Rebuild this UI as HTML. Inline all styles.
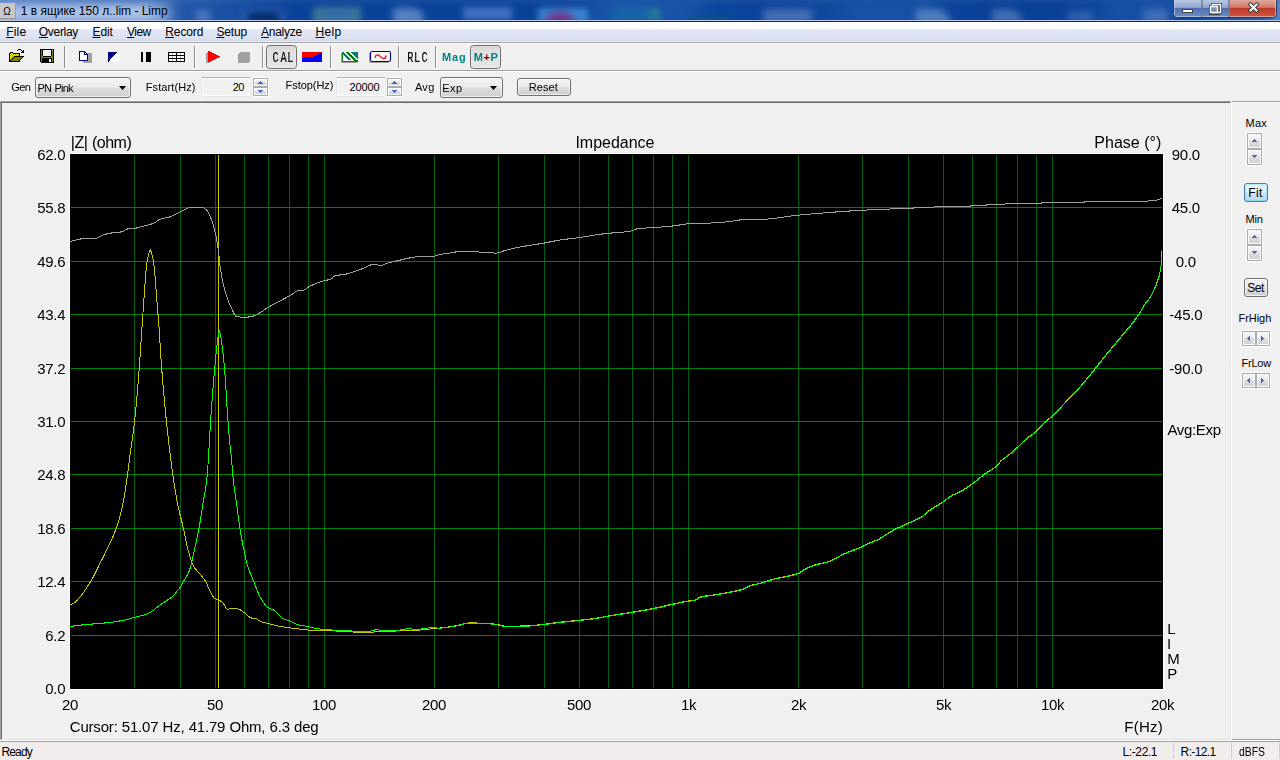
<!DOCTYPE html>
<html><head><meta charset="utf-8"><title>1 в ящике 150 л..lim - Limp</title>
<style>
html,body{margin:0;padding:0;}
body{width:1280px;height:760px;overflow:hidden;background:#f0f0f0;position:relative;font-family:"Liberation Sans",sans-serif;}
.t{position:absolute;white-space:pre;transform-origin:0 0;}
svg{position:absolute;overflow:visible;}
u{text-decoration:underline;text-underline-offset:1px;}
</style></head>
<body>
<div style="position:absolute;left:0;top:0;width:1280px;height:20px;overflow:hidden;background:linear-gradient(180deg,rgba(255,255,255,.05) 0,rgba(255,255,255,0) 6px),linear-gradient(90deg,#3f6cb6 0px,#1f55a8 200px,#0a429a 300px,#0a429a 560px,#0f489f 640px,#0a439b 760px,#0f489e 830px,#0f489e 900px,#083f97 1000px,#0d459c 1180px,#2e60b0 1280px);"><div style="position:absolute;left:590px;top:-10px;width:110px;height:40px;background:#1d57ad;filter:blur(10px);opacity:0.8;transform:skewX(-30deg);"></div><div style="position:absolute;left:840px;top:-10px;width:90px;height:40px;background:#1a53a8;filter:blur(10px);opacity:0.8;transform:skewX(-30deg);"></div><div style="position:absolute;left:1100px;top:-10px;width:80px;height:40px;background:#1c55aa;filter:blur(10px);opacity:0.7;transform:skewX(-30deg);"></div><div style="position:absolute;left:-30px;top:4px;width:200px;height:20px;background:#9db7e2;filter:blur(7px);opacity:1;"></div><div style="position:absolute;left:-10px;top:7px;width:160px;height:11px;background:#b7cbeb;filter:blur(5px);opacity:0.85;"></div><div style="position:absolute;left:196px;top:10px;width:14px;height:12px;background:#5580c4;filter:blur(3px);opacity:0.8;"></div><div style="position:absolute;left:242px;top:9px;width:42px;height:15px;background:#2a5cae;filter:blur(3px);opacity:0.9;"></div><div style="position:absolute;left:248px;top:12px;width:31px;height:12px;background:#032f6c;filter:blur(3px);opacity:1;"></div><div style="position:absolute;left:313px;top:7px;width:48px;height:17px;background:#5f9692;filter:blur(3px);opacity:0.62;"></div><div style="position:absolute;left:322px;top:11px;width:28px;height:6px;background:#2a6cb2;filter:blur(2.5px);opacity:0.9;"></div><div style="position:absolute;left:393px;top:8px;width:31px;height:16px;background:#5f8ac6;filter:blur(3.5px);opacity:0.9;border-radius:0 12px 0 0;"></div><div style="position:absolute;left:463px;top:7px;width:49px;height:13px;background:#4472c2;filter:blur(3px);opacity:0.95;"></div><div style="position:absolute;left:538px;top:8px;width:50px;height:16px;background:#3f86d0;filter:blur(3px);opacity:0.95;"></div><div style="position:absolute;left:544px;top:12px;width:32px;height:18px;background:#74358a;filter:blur(3.5px);opacity:1;border-radius:14px 14px 0 0;"></div><div style="position:absolute;left:612px;top:7px;width:48px;height:17px;background:#1b67a8;filter:blur(3.5px);opacity:0.85;"></div><div style="position:absolute;left:650px;top:9px;width:10px;height:11px;background:#2f8f8c;filter:blur(3px);opacity:0.6;"></div><div style="position:absolute;left:690px;top:17px;width:40px;height:7px;background:#0a5c80;filter:blur(3px);opacity:0.8;"></div><div style="position:absolute;left:763px;top:9px;width:49px;height:15px;background:#4a72b6;filter:blur(3.5px);opacity:0.9;"></div><div style="position:absolute;left:916px;top:9px;width:34px;height:15px;background:#5784c2;filter:blur(3.5px);opacity:0.9;border-radius:0 14px 0 0;"></div><div style="position:absolute;left:992px;top:9px;width:30px;height:15px;background:#4a74b6;filter:blur(3.5px);opacity:0.85;border-radius:0 12px 0 0;"></div><div style="position:absolute;left:1068px;top:10px;width:25px;height:14px;background:#3565b2;filter:blur(3.5px);opacity:0.8;"></div><div style="position:absolute;left:1143px;top:9px;width:25px;height:15px;background:#4674ba;filter:blur(3.5px);opacity:0.85;"></div><div style="position:absolute;left:1272px;top:-4px;width:18px;height:28px;background:#5f86c4;filter:blur(4px);opacity:0.9;"></div></div>
<div style="position:absolute;left:0px;top:20px;width:1280px;height:1px;background:#b9cbe8;"></div>
<div style="position:absolute;left:0px;top:21px;width:1280px;height:1px;background:#16284f;"></div>
<div style="position:absolute;left:0px;top:3px;width:16px;height:16px;background:#c8c8c8;border-right:1px solid #9a9a9a;border-bottom:1px solid #9a9a9a;box-sizing:border-box;"></div>
<span class="t " style="left:3.23px;top:7px;font-size:10px;line-height:10px;color:#000;">Ω</span>
<span class="t " style="left:20.73px;top:5px;font-size:12px;line-height:12px;color:#000;letter-spacing:-0.013px;word-spacing:0.013px;">1 в ящике 150 л..lim - Limp</span>
<svg style="left:1172px;top:0" width="106" height="19" viewBox="0 0 106 19"><defs><linearGradient id="wb" x1="0" y1="0" x2="0" y2="1"><stop offset="0" stop-color="#b8c8e2"/><stop offset=".45" stop-color="#8fa6cf"/><stop offset=".5" stop-color="#4f6fae"/><stop offset="1" stop-color="#6d8cc4"/></linearGradient><linearGradient id="wc" x1="0" y1="0" x2="0" y2="1"><stop offset="0" stop-color="#e2a79c"/><stop offset=".45" stop-color="#d2766a"/><stop offset=".5" stop-color="#bd3a27"/><stop offset="1" stop-color="#d0553e"/></linearGradient></defs><path d="M1.5 -1V13.5Q1.5 17.5 5.5 17.5H100.5Q104.5 17.5 104.5 13.5V-1Z" fill="#dfe6f3" stroke="#27375e" stroke-width="1"/><path d="M2.5 0H29.5V16.5H5.5Q2.5 16.5 2.5 13.5Z" fill="url(#wb)"/><path d="M30.5 0H56.5V16.5H30.5Z" fill="url(#wb)"/><path d="M57.5 0H103.5V13.5Q103.5 16.5 100.5 16.5H57.5Z" fill="url(#wc)"/><path d="M30 0V17M57 0V17" stroke="#33446e" stroke-width="1"/><rect x="10.5" y="9.5" width="10" height="3" fill="#fff" stroke="#444" stroke-width="1"/><path d="M40.500 4.500h8v8h-8z M38.500 6.500h8v7h-8z" fill="none" stroke="#444" stroke-width="3"/><path d="M40.500 4.500h8v8h-8z" fill="none" stroke="#fff" stroke-width="1.4"/><path d="M38.500 6.500h7v6h-7z" fill="#7890c0" stroke="#fff" stroke-width="1.4"/><path d="M78.500 4.500L84.500 10.500M84.500 4.500L78.500 10.500" stroke="#3a3a3a" stroke-width="4" stroke-linecap="square"/><path d="M78.500 4.500L84.500 10.500M84.500 4.500L78.500 10.500" stroke="#fff" stroke-width="2" stroke-linecap="square"/></svg>
<div style="position:absolute;left:0px;top:22px;width:1280px;height:20px;background:linear-gradient(180deg,#fff 0,#fff 6px,#e3e7f4 8px,#dde2f1 17px,#ced5e6 18px,#ced5e6 19px,#f3f4f9 19px,#f3f4f9 20px);"></div>
<div style="position:absolute;left:0px;top:42px;width:1280px;height:1px;background:#a0a0a0;"></div>
<span class="t " style="left:6.20px;top:26px;font-size:12px;line-height:12px;color:#000;letter-spacing:0.183px;"><u>F</u>ile</span>
<span class="t " style="left:38.80px;top:26px;font-size:12px;line-height:12px;color:#000;letter-spacing:-0.312px;"><u>O</u>verlay</span>
<span class="t " style="left:92.50px;top:26px;font-size:12px;line-height:12px;color:#000;letter-spacing:-0.108px;"><u>E</u>dit</span>
<span class="t " style="left:127.08px;top:26px;font-size:12px;line-height:12px;color:#000;letter-spacing:-0.583px;"><u>V</u>iew</span>
<span class="t " style="left:165.30px;top:26px;font-size:12px;line-height:12px;color:#000;letter-spacing:-0.115px;"><u>R</u>ecord</span>
<span class="t " style="left:216.50px;top:26px;font-size:12px;line-height:12px;color:#000;letter-spacing:-0.188px;"><u>S</u>etup</span>
<span class="t " style="left:261.00px;top:26px;font-size:12px;line-height:12px;color:#000;letter-spacing:-0.271px;"><u>A</u>nalyze</span>
<span class="t " style="left:315.50px;top:26px;font-size:12px;line-height:12px;color:#000;letter-spacing:0.292px;"><u>H</u>elp</span>
<div style="position:absolute;left:0px;top:43px;width:1280px;height:1px;background:#fafafa;"></div>
<div style="position:absolute;left:0px;top:70px;width:1280px;height:1px;background:#a0a0a0;"></div>
<div style="position:absolute;left:0px;top:71px;width:1280px;height:1px;background:#fff;"></div>
<div style="position:absolute;left:64px;top:46px;width:1px;height:22px;background:#8c8c8c;"></div>
<div style="position:absolute;left:65px;top:46px;width:1px;height:22px;background:#fff;"></div>
<div style="position:absolute;left:194px;top:46px;width:1px;height:22px;background:#8c8c8c;"></div>
<div style="position:absolute;left:195px;top:46px;width:1px;height:22px;background:#fff;"></div>
<div style="position:absolute;left:262px;top:46px;width:1px;height:22px;background:#8c8c8c;"></div>
<div style="position:absolute;left:263px;top:46px;width:1px;height:22px;background:#fff;"></div>
<div style="position:absolute;left:330px;top:46px;width:1px;height:22px;background:#8c8c8c;"></div>
<div style="position:absolute;left:331px;top:46px;width:1px;height:22px;background:#fff;"></div>
<div style="position:absolute;left:398px;top:46px;width:1px;height:22px;background:#8c8c8c;"></div>
<div style="position:absolute;left:399px;top:46px;width:1px;height:22px;background:#fff;"></div>
<div style="position:absolute;left:435px;top:46px;width:1px;height:22px;background:#8c8c8c;"></div>
<div style="position:absolute;left:436px;top:46px;width:1px;height:22px;background:#fff;"></div>
<svg style="left:9px;top:49px" width="16" height="13" viewBox="0 0 16 13" shape-rendering="crispEdges"><path fill="#000" d="M9 0h3v1h-3zM8 1h1v1h-1zM12 1h1v1h-1zM14 1h1v1h-1zM13 2h2v1h-2zM1 3h3v1h-3zM12 3h3v1h-3zM0 4h1v1h-1zM4 4h7v1h-7zM0 5h1v1h-1zM10 5h1v1h-1zM0 6h1v1h-1zM10 6h1v1h-1zM0 7h1v1h-1zM5 7h10v1h-10zM0 8h1v1h-1zM4 8h1v1h-1zM13 8h1v1h-1zM0 9h1v1h-1zM3 9h1v1h-1zM12 9h1v1h-1zM0 10h1v1h-1zM2 10h1v1h-1zM11 10h1v1h-1zM0 11h2v1h-2zM10 11h1v1h-1zM0 12h11v1h-11z"/><path fill="#00ff00" d="M1 4h1v1h-1zM3 4h1v1h-1zM2 5h1v1h-1zM4 5h1v1h-1zM6 5h1v1h-1zM8 5h1v1h-1zM1 6h1v1h-1zM3 6h1v1h-1zM5 6h1v1h-1zM7 6h1v1h-1zM9 6h1v1h-1zM2 7h1v1h-1zM4 7h1v1h-1zM1 8h1v1h-1zM3 8h1v1h-1zM2 9h1v1h-1zM1 10h1v1h-1z"/><path fill="#ffff00" d="M2 4h1v1h-1zM1 5h1v1h-1zM3 5h1v1h-1zM5 5h1v1h-1zM7 5h1v1h-1zM9 5h1v1h-1zM2 6h1v1h-1zM4 6h1v1h-1zM6 6h1v1h-1zM8 6h1v1h-1zM1 7h1v1h-1zM3 7h1v1h-1zM2 8h1v1h-1zM1 9h1v1h-1z"/><path fill="#808000" d="M5 8h8v1h-8zM4 9h8v1h-8zM3 10h8v1h-8zM2 11h8v1h-8z"/></svg>
<svg style="left:40px;top:49px" width="14" height="14" viewBox="0 0 14 14" shape-rendering="crispEdges"><path fill="#000" d="M0 0h14v1h-14zM0 1h1v1h-1zM2 1h1v1h-1zM11 1h1v1h-1zM13 1h1v1h-1zM0 2h1v1h-1zM2 2h1v1h-1zM11 2h1v1h-1zM13 2h1v1h-1zM0 3h1v1h-1zM2 3h1v1h-1zM11 3h1v1h-1zM13 3h1v1h-1zM0 4h1v1h-1zM2 4h1v1h-1zM11 4h1v1h-1zM13 4h1v1h-1zM0 5h1v1h-1zM2 5h1v1h-1zM11 5h1v1h-1zM13 5h1v1h-1zM0 6h1v1h-1zM2 6h1v1h-1zM11 6h1v1h-1zM13 6h1v1h-1zM0 7h1v1h-1zM3 7h8v1h-8zM13 7h1v1h-1zM0 8h1v1h-1zM13 8h1v1h-1zM0 9h1v1h-1zM2 9h10v1h-10zM13 9h1v1h-1zM0 10h1v1h-1zM2 10h7v1h-7zM11 10h1v1h-1zM13 10h1v1h-1zM0 11h1v1h-1zM2 11h7v1h-7zM11 11h1v1h-1zM13 11h1v1h-1zM0 12h1v1h-1zM2 12h7v1h-7zM11 12h1v1h-1zM13 12h1v1h-1zM1 13h13v1h-13z"/><path fill="#808000" d="M1 1h1v1h-1zM1 2h1v1h-1zM12 2h1v1h-1zM1 3h1v1h-1zM12 3h1v1h-1zM1 4h1v1h-1zM12 4h1v1h-1zM1 5h1v1h-1zM12 5h1v1h-1zM1 6h1v1h-1zM12 6h1v1h-1zM1 7h2v1h-2zM11 7h2v1h-2zM1 8h12v1h-12zM1 9h1v1h-1zM12 9h1v1h-1zM1 10h1v1h-1zM12 10h1v1h-1zM1 11h1v1h-1zM12 11h1v1h-1zM1 12h1v1h-1zM12 12h1v1h-1z"/><path fill="#f0f0f0" d="M3 1h8v1h-8zM12 1h1v1h-1zM3 2h8v1h-8zM3 3h8v1h-8zM3 4h8v1h-8zM3 5h8v1h-8zM3 6h8v1h-8zM9 10h2v1h-2zM9 11h2v1h-2zM9 12h2v1h-2z"/></svg>
<svg style="left:79px;top:51px" width="13" height="12" viewBox="0 0 13 12" shape-rendering="crispEdges"><path fill="#000080" d="M0 0h6v1h-6zM0 1h1v1h-1zM5 1h2v1h-2zM0 2h1v1h-1zM5 2h1v1h-1zM7 2h1v1h-1zM0 3h1v1h-1zM5 3h4v1h-4zM0 4h1v1h-1zM8 4h1v1h-1zM0 5h1v1h-1zM8 5h1v1h-1zM0 6h1v1h-1zM8 6h1v1h-1zM0 7h1v1h-1zM8 7h1v1h-1zM0 8h1v1h-1zM8 8h1v1h-1zM0 9h9v1h-9z"/><path fill="#fff" d="M1 1h4v1h-4zM1 2h4v1h-4zM6 2h1v1h-1zM1 3h4v1h-4zM1 4h7v1h-7zM1 5h7v1h-7zM1 6h7v1h-7zM1 7h7v1h-7zM1 8h7v1h-7z"/><path fill="#a0a0a0" d="M8 2h5v1h-5zM9 3h4v1h-4zM9 4h4v1h-4zM9 5h4v1h-4zM9 6h4v1h-4zM9 7h4v1h-4zM9 8h4v1h-4zM9 9h4v1h-4zM4 10h9v1h-9zM4 11h9v1h-9z"/></svg>
<svg style="left:108px;top:52px" width="12" height="10" viewBox="0 0 12 10" shape-rendering="crispEdges"><path fill="#000080" d="M0 0h9v1h-9zM0 1h8v1h-8zM0 2h7v1h-7zM0 3h6v1h-6zM0 4h5v1h-5zM0 5h4v1h-4zM0 6h3v1h-3zM1 7h1v1h-1zM0 8h2v1h-2zM0 9h1v1h-1z"/><path fill="#fff" d="M9 0h3v1h-3zM8 1h4v1h-4zM7 2h5v1h-5zM6 3h6v1h-6zM5 4h7v1h-7zM4 5h8v1h-8zM3 6h9v1h-9zM2 7h10v1h-10zM2 8h10v1h-10zM1 9h11v1h-11z"/><path fill="#000" d="M0 7h1v1h-1z"/></svg>
<svg style="left:141px;top:52px" width="10" height="10" viewBox="0 0 10 10" shape-rendering="crispEdges"><path fill="#000" d="M0 0h2v1h-2zM5 0h5v1h-5zM0 1h2v1h-2zM5 1h5v1h-5zM0 2h2v1h-2zM5 2h5v1h-5zM0 3h2v1h-2zM5 3h5v1h-5zM0 4h2v1h-2zM5 4h5v1h-5zM0 5h2v1h-2zM5 5h5v1h-5zM0 6h2v1h-2zM5 6h5v1h-5zM0 7h2v1h-2zM5 7h5v1h-5zM0 8h2v1h-2zM5 8h5v1h-5zM0 9h2v1h-2zM5 9h5v1h-5z"/></svg>
<svg style="left:168px;top:52px" width="17" height="10" viewBox="0 0 17 10" shape-rendering="crispEdges"><path fill="#000" d="M0 0h17v1h-17zM0 1h1v1h-1zM8 1h1v1h-1zM16 1h1v1h-1zM0 2h1v1h-1zM8 2h1v1h-1zM16 2h1v1h-1zM0 3h17v1h-17zM0 4h1v1h-1zM8 4h1v1h-1zM16 4h1v1h-1zM0 5h1v1h-1zM8 5h1v1h-1zM16 5h1v1h-1zM0 6h17v1h-17zM0 7h1v1h-1zM8 7h1v1h-1zM16 7h1v1h-1zM0 8h1v1h-1zM8 8h1v1h-1zM16 8h1v1h-1zM0 9h17v1h-17z"/><path fill="#fff" d="M1 1h3v1h-3zM5 1h3v1h-3zM9 1h3v1h-3zM13 1h3v1h-3zM1 2h3v1h-3zM5 2h3v1h-3zM9 2h3v1h-3zM13 2h3v1h-3zM1 4h3v1h-3zM5 4h3v1h-3zM9 4h3v1h-3zM13 4h3v1h-3zM1 5h3v1h-3zM5 5h3v1h-3zM9 5h3v1h-3zM13 5h3v1h-3zM1 7h3v1h-3zM5 7h3v1h-3zM9 7h3v1h-3zM13 7h3v1h-3zM1 8h3v1h-3zM5 8h3v1h-3zM9 8h3v1h-3zM13 8h3v1h-3z"/><path fill="#c0c0c0" d="M4 1h1v1h-1zM12 1h1v1h-1zM4 2h1v1h-1zM12 2h1v1h-1zM4 4h1v1h-1zM12 4h1v1h-1zM4 5h1v1h-1zM12 5h1v1h-1zM4 7h1v1h-1zM12 7h1v1h-1zM4 8h1v1h-1zM12 8h1v1h-1z"/></svg>
<svg style="left:206px;top:51px" width="15" height="12" viewBox="0 0 15 12" shape-rendering="crispEdges"><path fill="#ff0000" d="M2 0h2v1h-2zM2 1h4v1h-4zM2 2h6v1h-6zM2 3h8v1h-8zM2 4h10v1h-10zM2 5h12v1h-12zM2 6h10v1h-10zM2 7h8v1h-8zM2 8h6v1h-6zM2 9h4v1h-4zM2 10h2v1h-2z"/><path fill="#a0a0a0" d="M1 1h1v1h-1zM0 2h2v1h-2zM0 3h2v1h-2zM0 4h2v1h-2zM0 5h2v1h-2zM0 6h2v1h-2zM12 6h2v1h-2zM0 7h2v1h-2zM10 7h2v1h-2zM0 8h2v1h-2zM8 8h2v1h-2zM0 9h2v1h-2zM6 9h2v1h-2zM0 10h2v1h-2zM4 10h2v1h-2zM0 11h4v1h-4z"/></svg>
<svg style="left:238px;top:52px" width="12" height="11" viewBox="0 0 12 11" shape-rendering="crispEdges"><path fill="#a0a0a0" d="M2 0h10v1h-10zM1 1h11v1h-11zM0 2h12v1h-12zM0 3h12v1h-12zM0 4h12v1h-12zM0 5h12v1h-12zM0 6h12v1h-12zM0 7h12v1h-12zM0 8h12v1h-12zM0 9h12v1h-12zM0 10h11v1h-11z"/></svg>
<svg style="left:302px;top:52px" width="20" height="10" viewBox="0 0 20 10" shape-rendering="crispEdges"><path fill="#ff0000" d="M0 0h19v1h-19zM0 1h17v1h-17zM0 2h16v1h-16zM0 3h14v1h-14zM0 4h12v1h-12z"/><path fill="#0000ff" d="M19 0h1v1h-1zM17 1h3v1h-3zM16 2h4v1h-4zM14 3h6v1h-6zM12 4h8v1h-8zM0 5h20v1h-20zM0 6h20v1h-20zM0 7h20v1h-20zM0 8h20v1h-20zM0 9h20v1h-20z"/></svg>
<div style="position:absolute;left:266px;top:45px;width:31px;height:24px;box-sizing:border-box;border:1px solid #6f6f6f;border-radius:3.5px;background:linear-gradient(180deg,#cfcfcf 0,#dcdcdc 3px,#e4e4e4 45%,#e0e0e0 50%,#e6e6e6 100%);box-shadow:inset 0 0 0 1px rgba(255,255,255,.25);"></div>
<div style="position:absolute;left:470px;top:45px;width:31px;height:24px;box-sizing:border-box;border:1px solid #6f6f6f;border-radius:3.5px;background:linear-gradient(180deg,#cfcfcf 0,#dcdcdc 3px,#e4e4e4 45%,#e0e0e0 50%,#e6e6e6 100%);box-shadow:inset 0 0 0 1px rgba(255,255,255,.25);"></div>
<svg style="left:0;top:0;will-change:transform" width="1280" height="100"><text transform="scale(0.675,1)" x="403.63 415.41 425.41" y="62" font-family="Liberation Mono, monospace" font-size="15.2" fill="#000" stroke="#000" stroke-width="0.2">CAL</text></svg>
<svg style="left:0;top:0;will-change:transform" width="1280" height="100"><text transform="scale(0.675,1)" x="603.26 613.41 624.37" y="62" font-family="Liberation Mono, monospace" font-size="15.2" fill="#000" stroke="#000" stroke-width="0.2">RLC</text></svg>
<svg style="left:341px;top:52px" width="17" height="11" viewBox="0 0 17 11" shape-rendering="crispEdges"><path fill="#008080" d="M1 0h2v1h-2zM10 0h7v1h-7zM1 1h3v1h-3zM11 1h6v1h-6zM2 2h3v1h-3zM12 2h5v1h-5zM3 3h3v1h-3zM13 3h4v1h-4zM4 4h3v1h-3zM14 4h3v1h-3zM5 5h3v1h-3zM15 5h2v1h-2zM6 6h3v1h-3zM16 6h1v1h-1zM7 7h3v1h-3z"/><path fill="#fff" d="M3 0h2v1h-2zM8 0h2v1h-2zM4 1h2v1h-2zM9 1h2v1h-2zM5 2h2v1h-2zM10 2h2v1h-2zM2 3h1v1h-1zM6 3h2v1h-2zM11 3h2v1h-2zM2 4h2v1h-2zM7 4h2v1h-2zM12 4h2v1h-2zM2 5h3v1h-3zM8 5h2v1h-2zM13 5h2v1h-2zM2 6h4v1h-4zM9 6h2v1h-2zM14 6h2v1h-2zM2 7h5v1h-5zM10 7h2v1h-2zM15 7h2v1h-2zM2 8h11v1h-11z"/><path fill="#008000" d="M5 0h3v1h-3zM6 1h3v1h-3zM1 2h1v1h-1zM7 2h3v1h-3zM1 3h1v1h-1zM8 3h3v1h-3zM1 4h1v1h-1zM9 4h3v1h-3zM1 5h1v1h-1zM10 5h3v1h-3zM1 6h1v1h-1zM11 6h3v1h-3zM1 7h1v1h-1zM12 7h3v1h-3zM1 8h1v1h-1zM13 8h4v1h-4zM1 9h16v1h-16z"/><path fill="#a39da6" d="M0 1h1v1h-1zM0 2h1v1h-1zM0 3h1v1h-1zM0 4h1v1h-1zM0 5h1v1h-1zM0 6h1v1h-1zM0 7h1v1h-1zM0 8h1v1h-1zM0 9h1v1h-1zM0 10h16v1h-16z"/></svg>
<svg style="left:369px;top:51px" width="22" height="12" viewBox="-1 0 22 12"><path d="M-0.500 2v9.500h19" fill="none" stroke="#a8a0a0" stroke-width="1"/><rect x="0.500" y="0.500" width="20" height="10" rx="1.800" fill="#f6f6f6" stroke="#000080" stroke-width="1.100"/><path d="M5.300 6.300C5.600 3.200 8.300 3.200 10.500 5.600S15.500 8.600 16 4.800" fill="none" stroke="#ff0000" stroke-width="1.300" stroke-linecap="round"/></svg>
<span class="t " style="left:442.05px;top:52px;font-size:11px;line-height:11px;color:#008080;letter-spacing:0.850px;font-weight:bold;">Mag</span>
<span class="t " style="left:473.85px;top:52px;font-size:11px;line-height:11px;color:#008080;letter-spacing:0.562px;font-weight:bold;">M<span style="color:#800000">+</span>P</span>
<span class="t " style="left:11.30px;top:82px;font-size:11px;line-height:11px;color:#000;letter-spacing:-0.550px;">Gen</span>
<div style="position:absolute;left:35px;top:77px;width:96px;height:21px;box-sizing:border-box;border:1px solid #707070;border-radius:3px;background:linear-gradient(180deg,#f2f2f2 0,#ebebeb 48%,#dddddd 52%,#cfcfcf 100%);box-shadow:inset 0 0 0 1px rgba(255,255,255,.7);"></div>
<span class="t " style="left:37.52px;top:83px;font-size:11px;line-height:11px;color:#000;letter-spacing:-0.735px;word-spacing:0.735px;">PN Pink</span>
<svg style="left:119px;top:86px" width="7" height="4" viewBox="0 0 7 4"><path d="M0 0H7L3.500 4Z" fill="#000"/></svg>
<span class="t " style="left:145.72px;top:82px;font-size:11px;line-height:11px;color:#000;letter-spacing:0.103px;">Fstart(Hz)</span>
<div style="position:absolute;left:201px;top:77px;width:50px;height:20px;box-sizing:border-box;border:1px solid #e1e4ea;border-top-color:#b0b3ba;background:#f1f1f1;border-radius:2px;box-shadow:inset 0 0 0 1px #fdfdfd;"></div>
<span class="t " style="left:232.70px;top:82px;font-size:11px;line-height:11px;color:#000;letter-spacing:-0.475px;">20</span>
<svg style="left:252px;top:77px" width="17" height="20" viewBox="-1 -1 17 20" shape-rendering="crispEdges"><defs><linearGradient id="sg0" x1="0" y1="0" x2="0" y2="1"><stop offset="0" stop-color="#f3f3f3"/><stop offset=".45" stop-color="#ececec"/><stop offset=".5" stop-color="#dedede"/><stop offset="1" stop-color="#d3d3d3"/></linearGradient></defs><rect x="-1" y="-1" width="17" height="20" fill="#fff"/><rect x="0" y="0" width="15" height="18" fill="#a9abb3"/><rect x="1" y="1" width="13" height="7" fill="#fcfcfc"/><rect x="2" y="2" width="11" height="5" fill="url(#sg0)"/><path d="M7 3h1v1h-1zM6 4h3v1h-3zM5 5h5v1h-5z" fill="#4a63c4"/><rect x="1" y="10" width="13" height="7" fill="#fcfcfc"/><rect x="2" y="11" width="11" height="5" fill="url(#sg0)"/><path d="M5 12h5v1h-5zM6 13h3v1h-3zM7 14h1v1h-1z" fill="#4a63c4"/></svg>
<span class="t " style="left:285.52px;top:80px;font-size:11px;line-height:11px;color:#000;letter-spacing:-0.044px;">Fstop(Hz)</span>
<div style="position:absolute;left:336px;top:77px;width:50px;height:20px;box-sizing:border-box;border:1px solid #e1e4ea;border-top-color:#b0b3ba;background:#f1f1f1;border-radius:2px;box-shadow:inset 0 0 0 1px #fdfdfd;"></div>
<span class="t " style="left:349.50px;top:82px;font-size:11px;line-height:11px;color:#000;letter-spacing:-0.088px;">20000</span>
<svg style="left:386px;top:77px" width="17" height="20" viewBox="-1 -1 17 20" shape-rendering="crispEdges"><defs><linearGradient id="sg1" x1="0" y1="0" x2="0" y2="1"><stop offset="0" stop-color="#f3f3f3"/><stop offset=".45" stop-color="#ececec"/><stop offset=".5" stop-color="#dedede"/><stop offset="1" stop-color="#d3d3d3"/></linearGradient></defs><rect x="-1" y="-1" width="17" height="20" fill="#fff"/><rect x="0" y="0" width="15" height="18" fill="#a9abb3"/><rect x="1" y="1" width="13" height="7" fill="#fcfcfc"/><rect x="2" y="2" width="11" height="5" fill="url(#sg1)"/><path d="M7 3h1v1h-1zM6 4h3v1h-3zM5 5h5v1h-5z" fill="#4a63c4"/><rect x="1" y="10" width="13" height="7" fill="#fcfcfc"/><rect x="2" y="11" width="11" height="5" fill="url(#sg1)"/><path d="M5 12h5v1h-5zM6 13h3v1h-3zM7 14h1v1h-1z" fill="#4a63c4"/></svg>
<span class="t " style="left:414.90px;top:82px;font-size:11px;line-height:11px;color:#000;letter-spacing:0.300px;">Avg</span>
<div style="position:absolute;left:440px;top:77px;width:63px;height:21px;box-sizing:border-box;border:1px solid #707070;border-radius:3px;background:linear-gradient(180deg,#f2f2f2 0,#ebebeb 48%,#dddddd 52%,#cfcfcf 100%);box-shadow:inset 0 0 0 1px rgba(255,255,255,.7);"></div>
<span class="t " style="left:442.32px;top:83px;font-size:11px;line-height:11px;color:#000;letter-spacing:0.387px;">Exp</span>
<svg style="left:490px;top:86px" width="7" height="4" viewBox="0 0 7 4"><path d="M0 0H7L3.500 4Z" fill="#000"/></svg>
<div style="position:absolute;left:517px;top:78px;width:54px;height:18px;box-sizing:border-box;border:1px solid #707070;border-radius:3px;background:linear-gradient(180deg,#f2f2f2 0,#ebebeb 48%,#dddddd 52%,#cfcfcf 100%);box-shadow:inset 0 0 0 1px rgba(255,255,255,.7);"></div>
<span class="t " style="left:528.73px;top:82px;font-size:11px;line-height:11px;color:#000;letter-spacing:0.112px;">Reset</span>
<div style="position:absolute;left:0px;top:101px;width:1231px;height:1px;background:#a0a0a0;"></div>
<div style="position:absolute;left:1px;top:102px;width:1230px;height:1px;background:#696969;"></div>
<div style="position:absolute;left:0px;top:101px;width:1px;height:640px;background:#a0a0a0;"></div>
<div style="position:absolute;left:1px;top:102px;width:1px;height:638px;background:#696969;"></div>
<div style="position:absolute;left:1230px;top:102px;width:1px;height:639px;background:#e3e3e3;"></div>
<div style="position:absolute;left:1231px;top:101px;width:1px;height:640px;background:#fff;"></div>
<div style="position:absolute;left:1px;top:739px;width:1230px;height:1px;background:#e3e3e3;"></div>
<div style="position:absolute;left:0px;top:740px;width:1280px;height:1px;background:#fff;"></div>
<div style="position:absolute;left:1232px;top:739px;width:48px;height:1px;background:#a0a0a0;"></div>
<div style="position:absolute;left:1232px;top:101px;width:48px;height:1px;background:#a0a0a0;"></div>
<div style="position:absolute;left:1232px;top:102px;width:48px;height:1px;background:#fff;"></div>
<span class="t " style="left:1245.62px;top:118px;font-size:11px;line-height:11px;color:#000;letter-spacing:0.125px;">Max</span>
<svg style="left:1246px;top:132px" width="17" height="34" viewBox="-1 -1 17 34" shape-rendering="crispEdges"><defs><linearGradient id="sg2" x1="0" y1="0" x2="0" y2="1"><stop offset="0" stop-color="#f3f3f3"/><stop offset=".45" stop-color="#ececec"/><stop offset=".5" stop-color="#dedede"/><stop offset="1" stop-color="#d3d3d3"/></linearGradient></defs><rect x="-1" y="-1" width="17" height="34" fill="#fff"/><rect x="0" y="0" width="15" height="32" fill="#a9abb3"/><rect x="1" y="1" width="13" height="14" fill="#fcfcfc"/><rect x="2" y="2" width="11" height="12" fill="url(#sg2)"/><path d="M7 6h1v1h-1zM6 7h3v1h-3zM5 8h5v1h-5z" fill="#4a63c4"/><rect x="1" y="17" width="13" height="14" fill="#fcfcfc"/><rect x="2" y="18" width="11" height="12" fill="url(#sg2)"/><path d="M5 22h5v1h-5zM6 23h3v1h-3zM7 24h1v1h-1z" fill="#4a63c4"/></svg>
<div style="position:absolute;left:1244px;top:183px;width:24px;height:19px;box-sizing:border-box;border:1px solid #3c7fb1;border-radius:3px;background:linear-gradient(180deg,#f0f6fb 0,#e3eff9 48%,#cfe3f4 52%,#bcd8ef 100%);box-shadow:inset 0 0 0 1px #48d8fb55;"></div>
<span class="t " style="left:1248.30px;top:187px;font-size:12px;line-height:12px;color:#000;letter-spacing:0.325px;">Fit</span>
<span class="t " style="left:1245.62px;top:214px;font-size:11px;line-height:11px;color:#000;letter-spacing:-0.213px;">Min</span>
<svg style="left:1246px;top:228px" width="17" height="34" viewBox="-1 -1 17 34" shape-rendering="crispEdges"><defs><linearGradient id="sg3" x1="0" y1="0" x2="0" y2="1"><stop offset="0" stop-color="#f3f3f3"/><stop offset=".45" stop-color="#ececec"/><stop offset=".5" stop-color="#dedede"/><stop offset="1" stop-color="#d3d3d3"/></linearGradient></defs><rect x="-1" y="-1" width="17" height="34" fill="#fff"/><rect x="0" y="0" width="15" height="32" fill="#a9abb3"/><rect x="1" y="1" width="13" height="14" fill="#fcfcfc"/><rect x="2" y="2" width="11" height="12" fill="url(#sg3)"/><path d="M7 6h1v1h-1zM6 7h3v1h-3zM5 8h5v1h-5z" fill="#4a63c4"/><rect x="1" y="17" width="13" height="14" fill="#fcfcfc"/><rect x="2" y="18" width="11" height="12" fill="url(#sg3)"/><path d="M5 22h5v1h-5zM6 23h3v1h-3zM7 24h1v1h-1z" fill="#4a63c4"/></svg>
<div style="position:absolute;left:1244px;top:278px;width:24px;height:19px;box-sizing:border-box;border:1px solid #707070;border-radius:3px;background:linear-gradient(180deg,#f2f2f2 0,#ebebeb 48%,#dddddd 52%,#cfcfcf 100%);box-shadow:inset 0 0 0 1px rgba(255,255,255,.7);"></div>
<span class="t " style="left:1247.20px;top:282px;font-size:12px;line-height:12px;color:#000;letter-spacing:-0.488px;">Set</span>
<span class="t " style="left:1238.53px;top:313px;font-size:11px;line-height:11px;color:#000;letter-spacing:-0.055px;">FrHigh</span>
<svg style="left:1241px;top:330px" width="30" height="17" viewBox="-1 -1 30 17" shape-rendering="crispEdges"><defs><linearGradient id="sg4" x1="0" y1="0" x2="0" y2="1"><stop offset="0" stop-color="#f3f3f3"/><stop offset=".45" stop-color="#ececec"/><stop offset=".5" stop-color="#dedede"/><stop offset="1" stop-color="#d3d3d3"/></linearGradient></defs><rect x="-1" y="-1" width="30" height="17" fill="#fff"/><rect x="0" y="0" width="28" height="15" fill="#a9abb3"/><rect x="1" y="1" width="12" height="13" fill="#fcfcfc"/><rect x="2" y="2" width="10" height="11" fill="url(#sg4)"/><path d="M5 7h1v1h-1zM6 6h1v3h-1zM7 5h1v5h-1z" fill="#4a63c4"/><rect x="15" y="1" width="12" height="13" fill="#fcfcfc"/><rect x="16" y="2" width="10" height="11" fill="url(#sg4)"/><path d="M19 5h1v5h-1zM20 6h1v3h-1zM21 7h1v1h-1z" fill="#4a63c4"/></svg>
<span class="t " style="left:1241.62px;top:358px;font-size:11px;line-height:11px;color:#000;letter-spacing:-0.263px;">FrLow</span>
<svg style="left:1241px;top:372px" width="30" height="17" viewBox="-1 -1 30 17" shape-rendering="crispEdges"><defs><linearGradient id="sg5" x1="0" y1="0" x2="0" y2="1"><stop offset="0" stop-color="#f3f3f3"/><stop offset=".45" stop-color="#ececec"/><stop offset=".5" stop-color="#dedede"/><stop offset="1" stop-color="#d3d3d3"/></linearGradient></defs><rect x="-1" y="-1" width="30" height="17" fill="#fff"/><rect x="0" y="0" width="28" height="15" fill="#a9abb3"/><rect x="1" y="1" width="12" height="13" fill="#fcfcfc"/><rect x="2" y="2" width="10" height="11" fill="url(#sg5)"/><path d="M5 7h1v1h-1zM6 6h1v3h-1zM7 5h1v5h-1z" fill="#4a63c4"/><rect x="15" y="1" width="12" height="13" fill="#fcfcfc"/><rect x="16" y="2" width="10" height="11" fill="url(#sg5)"/><path d="M19 5h1v5h-1zM20 6h1v3h-1zM21 7h1v1h-1z" fill="#4a63c4"/></svg>
<div style="position:absolute;left:0px;top:741px;width:1280px;height:1px;background:#a0a0a0;"></div>
<div style="position:absolute;left:0px;top:742px;width:1280px;height:18px;background:#f1eded;"></div>
<span class="t " style="left:1.40px;top:746px;font-size:12px;line-height:12px;color:#000;letter-spacing:-0.838px;">Ready</span>
<div style="position:absolute;left:1173px;top:743px;width:1px;height:16px;background:#d0d0d0;"></div>
<div style="position:absolute;left:1231px;top:743px;width:1px;height:16px;background:#d0d0d0;"></div>
<div style="position:absolute;left:1279px;top:743px;width:1px;height:16px;background:#d0d0d0;"></div>
<span class="t " style="left:1122.60px;top:746px;font-size:12px;line-height:12px;color:#000;letter-spacing:-0.408px;">L:-22.1</span>
<span class="t " style="left:1180.60px;top:746px;font-size:12px;line-height:12px;color:#000;letter-spacing:-0.625px;">R:-12.1</span>
<span class="t " style="left:1239.37px;top:746px;font-size:12px;line-height:12px;color:#000;transform:scaleX(0.8690);">dBFS</span>
<svg style="left:0;top:0" width="1280" height="760" viewBox="0 0 1280 760"><rect x="69" y="153" width="1095" height="537" fill="#fff"/><rect x="70" y="154" width="1093" height="535" fill="#000"/><path d="M134 155h1v533h-1zM180 155h1v533h-1zM215 155h1v533h-1zM244 155h1v533h-1zM268 155h1v533h-1zM289 155h1v533h-1zM308 155h1v533h-1zM324 155h1v533h-1zM434 155h1v533h-1zM498 155h1v533h-1zM544 155h1v533h-1zM579 155h1v533h-1zM608 155h1v533h-1zM632 155h1v533h-1zM653 155h1v533h-1zM672 155h1v533h-1zM688 155h1v533h-1zM798 155h1v533h-1zM862 155h1v533h-1zM908 155h1v533h-1zM943 155h1v533h-1zM972 155h1v533h-1zM996 155h1v533h-1zM1017 155h1v533h-1zM1036 155h1v533h-1zM1052 155h1v533h-1z" fill="#005f12" shape-rendering="crispEdges"/><path d="M71 207h1091v1h-1091zM71 261h1091v1h-1091zM71 314h1091v1h-1091zM71 368h1091v1h-1091zM71 421h1091v1h-1091zM71 474h1091v1h-1091zM71 528h1091v1h-1091zM71 581h1091v1h-1091zM71 635h1091v1h-1091z" fill="#008400" shape-rendering="crispEdges"/><path d="M218 155h1v533h-1z" fill="#c8c800" shape-rendering="crispEdges"/><polyline points="70.0,604.9 70.5,604.7 71.0,604.5 71.5,604.3 72.0,604.1 72.5,603.9 73.0,603.7 73.5,603.5 74.0,603.2 74.5,602.9 75.0,602.6 75.5,602.2 76.0,601.7 76.5,601.1 77.0,600.5 77.5,599.9 78.0,599.2 78.5,598.6 79.0,598.0 79.5,597.4 80.0,596.9 80.5,596.3 81.0,595.7 81.5,595.1 82.0,594.6 82.5,593.9 83.0,593.3 83.5,592.7 84.0,592.0 84.5,591.2 85.0,590.4 85.5,589.5 86.0,588.7 86.5,587.8 87.0,587.0 87.5,586.2 88.0,585.5 88.5,584.8 89.0,584.0 89.5,583.3 90.0,582.6 90.5,581.8 91.0,581.0 91.5,580.2 92.0,579.3 92.5,578.4 93.0,577.5 93.5,576.5 94.0,575.6 94.5,574.6 95.0,573.6 95.5,572.6 96.0,571.6 96.5,570.6 97.0,569.6 97.5,568.5 98.0,567.5 98.5,566.5 99.0,565.4 99.5,564.4 100.0,563.4 100.5,562.4 101.0,561.4 101.5,560.5 102.0,559.5 102.5,558.5 103.0,557.5 103.5,556.5 104.0,555.5 104.5,554.4 105.0,553.4 105.5,552.4 106.0,551.3 106.5,550.2 107.0,549.2 107.5,548.2 108.0,547.1 108.5,546.1 109.0,545.1 109.5,544.0 110.0,543.0 110.5,542.0 111.0,540.9 111.5,539.8 112.0,538.7 112.5,537.6 113.0,536.5 113.5,535.3 114.0,534.1 114.5,532.8 115.0,531.6 115.5,530.2 116.0,528.9 116.5,527.4 117.0,526.0 117.5,524.5 118.0,522.9 118.5,521.3 119.0,519.6 119.5,517.8 120.0,516.0 120.5,514.1 121.0,512.1 121.5,510.0 122.0,507.9 122.5,505.7 123.0,503.3 123.5,500.7 124.0,497.9 124.5,495.0 125.0,491.9 125.5,488.7 126.0,485.4 126.5,482.0 127.0,478.5 127.5,475.0 128.0,471.3 128.5,467.3 129.0,463.2 129.5,459.2 130.0,455.4 130.5,451.7 131.0,448.0 131.5,444.4 132.0,440.9 132.5,437.4 133.0,433.9 133.5,430.3 134.0,426.4 134.5,422.2 135.0,417.6 135.5,412.6 136.0,407.3 136.5,401.8 137.0,395.9 137.5,389.9 138.0,383.7 138.5,377.3 139.0,370.9 139.5,364.3 140.0,357.3 140.5,350.0 141.0,342.5 141.5,334.9 142.0,327.3 142.5,320.0 143.0,312.9 143.5,305.8 144.0,298.4 144.5,291.0 145.0,283.8 145.5,277.1 146.0,271.0 146.5,265.9 147.0,261.9 147.5,259.1 148.0,256.7 148.5,254.7 149.0,253.0 149.5,251.4 150.0,250.1 150.2,249.6 150.7,250.7 151.2,252.0 151.7,253.6 152.2,255.4 152.7,257.6 153.2,260.2 153.7,263.3 154.2,267.4 154.7,272.5 155.2,278.3 155.7,284.6 156.2,291.2 156.7,297.9 157.2,304.5 157.7,310.8 158.2,316.5 158.7,322.6 159.2,329.7 159.7,337.5 160.2,345.6 160.7,353.6 161.2,361.3 161.7,368.3 162.2,374.7 162.7,380.9 163.2,386.9 163.7,392.7 164.2,398.3 164.7,403.8 165.2,409.1 165.7,414.2 166.2,419.3 166.7,424.2 167.2,429.0 167.7,433.6 168.2,438.1 168.7,442.5 169.2,446.7 169.7,450.8 170.2,454.7 170.7,458.5 171.2,462.4 171.7,466.5 172.2,470.6 172.7,474.3 173.2,477.7 173.7,481.1 174.2,484.3 174.7,487.4 175.2,490.5 175.7,493.4 176.2,496.3 176.7,499.0 177.2,501.7 177.7,504.2 178.2,506.7 178.7,509.0 179.2,511.2 179.7,513.3 180.2,515.3 180.7,517.3 181.2,519.3 181.7,521.3 182.2,523.3 182.7,525.3 183.2,527.4 183.7,529.6 184.2,532.0 184.7,534.4 185.2,536.9 185.7,539.4 186.2,541.8 186.7,544.2 187.2,546.5 187.7,548.6 188.2,550.6 188.7,552.3 189.2,554.1 189.7,555.8 190.2,557.4 190.7,559.0 191.2,560.5 191.7,562.0 192.2,563.3 192.7,564.6 193.2,565.7 193.7,566.7 194.2,567.6 194.7,568.3 195.2,568.9 195.7,569.4 196.2,569.9 196.7,570.5 197.2,571.0 197.7,571.6 198.2,572.1 198.7,572.7 199.2,573.2 199.7,573.8 200.2,574.4 200.7,574.9 201.2,575.5 201.7,576.1 202.2,576.7 202.7,577.3 203.2,578.0 203.7,578.7 204.2,579.4 204.7,580.1 205.2,580.9 205.7,581.7 206.2,582.5 206.7,583.6 207.2,584.7 207.7,585.9 208.2,587.1 208.7,588.3 209.2,589.4 209.7,590.4 210.2,591.4 210.7,592.4 211.2,593.4 211.7,594.4 212.2,595.3 212.7,596.2 213.2,596.9 213.7,597.6 214.2,598.1 214.7,598.5 215.2,598.7 215.7,598.9 216.2,599.1 216.7,599.2 217.2,599.4 217.7,599.5 218.2,599.7 218.7,599.9 219.2,600.2 219.7,600.5 220.2,600.8 220.7,601.2 221.2,601.6 221.7,602.0 222.2,602.4 222.7,602.8 223.2,603.3 223.7,603.9 224.2,604.7 224.7,605.6 225.2,606.5 225.7,607.4 226.2,608.1 226.7,608.7 227.2,609.1 227.7,609.2 228.2,609.2 228.7,609.1 229.2,609.0 229.7,608.8 230.2,608.7 230.7,608.5 231.2,608.4 231.7,608.3 232.2,608.2 232.7,608.1 233.2,608.1 233.7,608.1 234.2,608.2 234.7,608.2 235.2,608.3 235.7,608.4 236.2,608.5 236.7,608.7 237.2,608.8 237.7,608.9 238.2,609.1 238.7,609.2 239.2,609.4 239.7,609.7 240.2,609.9 240.7,610.2 241.2,610.6 241.7,610.9 242.2,611.3 242.7,611.6 243.2,612.0 243.7,612.4 244.2,612.7 244.7,613.0 245.2,613.4 245.7,613.8 246.2,614.2 246.7,614.6 247.2,615.1 247.7,615.5 248.2,615.9 248.7,616.3 249.2,616.7 249.7,617.1 250.2,617.4 250.7,617.7 251.2,617.9 251.7,618.1 252.2,618.3 252.7,618.3 253.2,618.4 253.7,618.4 254.2,618.5 254.7,618.5 255.2,618.6 255.7,618.6 256.2,618.8 256.7,619.0 257.2,619.3 257.7,619.7 258.2,620.0 258.7,620.4 259.2,620.7 259.7,621.0 260.2,621.3 260.7,621.5 261.2,621.6 261.7,621.8 262.2,622.0 262.7,622.1 263.2,622.2 263.7,622.4 264.2,622.5 264.7,622.6 265.2,622.7 265.7,622.8 266.2,623.0 266.7,623.1 267.2,623.2 267.7,623.3 268.2,623.4 268.7,623.6 269.2,623.7 269.7,623.9 270.2,624.0 270.7,624.1 271.2,624.3 271.7,624.4 272.2,624.6 272.7,624.7 273.2,624.8 273.7,625.0 274.2,625.1 274.7,625.2 275.2,625.4 275.7,625.5 276.2,625.6 276.7,625.7 277.2,625.8 277.7,625.9 278.2,626.0 278.7,626.1 279.2,626.2 279.7,626.3 280.2,626.4 280.7,626.5 281.2,626.6 281.7,626.6 282.2,626.7 282.7,626.8 283.2,626.9 283.7,627.0 284.2,627.0 284.7,627.1 285.2,627.2 285.7,627.3 286.2,627.3 286.7,627.4 287.2,627.5 287.7,627.5 288.2,627.6 288.7,627.7 289.2,627.7 289.7,627.8 290.2,627.9 290.7,627.9 291.2,628.0 291.7,628.1 292.2,628.1 292.7,628.2 293.2,628.3 293.7,628.3 294.2,628.4 294.7,628.4 295.2,628.5 295.7,628.6 296.2,628.6 296.7,628.7 297.2,628.7 297.7,628.8 298.2,628.8 298.7,628.9 299.2,629.0 299.7,629.0 300.2,629.1 300.7,629.1 301.2,629.2 301.7,629.2 302.2,629.3 302.7,629.3 303.2,629.4 303.7,629.4 304.2,629.5 304.7,629.5 305.2,629.6 305.7,629.7 306.2,629.7 306.7,629.8 307.2,629.8 307.7,629.9 308.2,630.0 308.7,630.0 309.2,630.1 309.7,630.2 310.2,630.2 310.7,630.3 311.2,630.4 311.7,630.4 312.2,630.5 312.7,630.5 313.2,630.6 313.7,630.7 314.2,630.7 314.7,630.7 315.2,630.8 315.7,630.8 316.2,630.8 316.7,630.9 317.2,630.9 317.7,630.9 318.2,630.9 318.7,630.9 319.2,630.9 319.7,630.9 320.2,630.9 320.7,630.9 321.2,630.9 321.7,630.9 322.2,630.9 322.7,630.9 323.2,630.9 323.7,630.9 324.2,630.9 324.7,630.9 325.2,630.9 325.7,630.9 326.2,630.9 326.7,630.9 327.2,630.9 327.7,630.9 328.2,630.9 328.7,630.9 329.2,630.9 329.7,630.9 330.2,630.9 330.7,630.9 331.2,630.9 331.7,630.9 332.2,630.9 332.7,630.9 333.2,630.9 333.7,630.9 334.2,630.9 334.7,630.9 335.2,630.9 335.7,630.9 336.2,631.0 336.7,631.0 337.2,631.0 337.7,631.0 338.2,631.0 338.7,631.0 339.2,631.1 339.7,631.1 340.2,631.1 340.7,631.2 341.2,631.2 341.7,631.2 342.2,631.2 342.7,631.3 343.2,631.3 343.7,631.3 344.2,631.4 344.7,631.4 345.2,631.4 345.7,631.5 346.2,631.5 346.7,631.5 347.2,631.6 347.7,631.6 348.2,631.7 348.7,631.7 349.2,631.7 349.7,631.8 350.2,631.8 350.7,631.8 351.2,631.9 351.7,631.9 352.2,631.9 352.7,631.9 353.2,632.0 353.7,632.0 354.2,632.0 354.7,632.1 355.2,632.1 355.7,632.1 356.2,632.1 356.7,632.1 357.2,632.1 357.7,632.2 358.2,632.2 358.7,632.2 359.2,632.2 359.7,632.2 360.2,632.2 360.7,632.2 361.2,632.2 361.7,632.2 362.2,632.2 362.7,632.2 363.2,632.2 363.7,632.2 364.2,632.2 364.7,632.2 365.2,632.2 365.7,632.2 366.2,632.1 366.7,632.1 367.2,632.1 367.7,632.1 368.2,632.1 368.7,632.1 369.2,632.1 369.7,632.1 370.2,632.1 370.7,632.0 371.2,632.0 371.7,632.0 372.2,632.0 372.7,632.0 373.2,632.0 373.7,632.0 374.2,631.9 374.7,631.9 375.2,631.9 375.7,631.9 376.2,631.9 376.7,631.9 377.2,631.9 377.7,631.8 378.2,631.8 378.7,631.8 379.2,631.8 379.7,631.8 380.2,631.8 380.7,631.7 381.2,631.7 381.7,631.7 382.2,631.7 382.7,631.7 383.2,631.6 383.7,631.6 384.2,631.6 384.7,631.6 385.2,631.5 385.7,631.5 386.2,631.5 386.7,631.4 387.2,631.4 387.7,631.4 388.2,631.4 388.7,631.3 389.2,631.3 389.7,631.3 390.2,631.3 390.7,631.2 391.2,631.2 391.7,631.2 392.2,631.1 392.7,631.1 393.2,631.1 393.7,631.1 394.2,631.0 394.7,631.0 395.2,631.0 395.7,631.0 396.2,630.9 396.7,630.9 397.2,630.9 397.7,630.9 398.2,630.9 398.7,630.8 399.2,630.8 399.7,630.8 400.2,630.8 400.7,630.8 401.2,630.8 401.7,630.8 402.2,630.7 402.7,630.7 403.2,630.7 403.7,630.7 404.2,630.7 404.7,630.7 405.2,630.7 405.7,630.6 406.2,630.6 406.7,630.6 407.2,630.6 407.7,630.6 408.2,630.6 408.7,630.6 409.2,630.5 409.7,630.5 410.2,630.5 410.7,630.5 411.2,630.5 411.7,630.5 412.2,630.4 412.7,630.4 413.2,630.4 413.7,630.4 414.2,630.4 414.7,630.3 415.2,630.3 415.7,630.3 416.2,630.3 416.7,630.2 417.2,630.2 417.7,630.2 418.2,630.1 418.7,630.1 419.2,630.1 419.7,630.0 420.2,630.0 420.7,629.9 421.2,629.9 421.7,629.8 422.2,629.8 422.7,629.7 423.2,629.7 423.7,629.6 424.2,629.6 424.7,629.5 425.2,629.5 425.7,629.4 426.2,629.4 426.7,629.3 427.2,629.3 427.7,629.2 428.2,629.1 428.7,629.1 429.2,629.0 429.7,629.0 430.2,628.9 430.7,628.9 431.2,628.8 431.7,628.8 432.2,628.7 432.7,628.7 433.2,628.6 433.7,628.5 434.2,628.5 434.7,628.5 435.2,628.4 435.7,628.4 436.2,628.3 436.7,628.3 437.2,628.2 437.7,628.2 438.2,628.1 438.7,628.1 439.2,628.0 439.7,628.0 440.2,627.9 440.7,627.9 441.2,627.8 441.7,627.8 442.2,627.7 442.7,627.7 443.2,627.6 443.7,627.5 444.2,627.5 444.7,627.4 445.2,627.3 445.7,627.3 446.2,627.2 446.7,627.1 447.2,627.1 447.7,627.0 448.2,626.9 448.7,626.9 449.2,626.8 449.7,626.7 450.2,626.6 450.7,626.5 451.2,626.5 451.7,626.4 452.2,626.3 452.7,626.2 453.2,626.1 453.7,626.1 454.2,626.0 454.7,625.9 455.2,625.8 455.7,625.7 456.2,625.6 456.7,625.5 457.2,625.4 457.7,625.3 458.2,625.2 458.7,625.0 459.2,624.9 459.7,624.8 460.2,624.6 460.7,624.5 461.2,624.4 461.7,624.2 462.2,624.1 462.7,624.0 463.2,623.9 463.7,623.7 464.2,623.6 464.7,623.5 465.2,623.4 465.7,623.3 466.2,623.2 466.7,623.1 467.2,623.1 467.7,623.0 468.2,622.9 468.7,622.9 469.2,622.9 469.7,622.9 470.2,622.9 470.7,622.9 471.2,622.9 471.7,622.9 472.2,622.9 472.7,622.9 473.2,622.9 473.7,622.9 474.2,622.9 474.7,622.9 475.2,622.9 475.7,622.9 476.2,622.9 476.7,622.9 477.2,623.0 477.7,623.0 478.2,623.0 478.7,623.0 479.2,623.0 479.7,623.0 480.2,623.0 480.7,623.1 481.2,623.1 481.7,623.1 482.2,623.1 482.7,623.1 483.2,623.2 483.7,623.2 484.2,623.2 484.7,623.2 485.2,623.2 485.7,623.3 486.2,623.3 486.7,623.3 487.2,623.3 487.7,623.4 488.2,623.4 488.7,623.4 489.2,623.5 489.7,623.5 490.2,623.5 490.7,623.6 491.2,623.6 491.7,623.7 492.2,623.7 492.7,623.8 493.2,623.8 493.7,623.9 494.2,624.0 494.7,624.0 495.2,624.1 495.7,624.2 496.2,624.3 496.7,624.3 497.2,624.4 497.7,624.5 498.2,624.6 498.7,624.6 499.2,624.7 499.7,624.9 500.2,625.0 500.7,625.2 501.2,625.3 501.7,625.5 502.2,625.6 502.7,625.8 503.2,625.9 503.7,626.0 504.2,626.1 504.7,626.1 505.2,626.1 505.7,626.1 506.2,626.1 506.7,626.1 507.2,626.1 507.7,626.1 508.2,626.1 508.7,626.1 509.2,626.1 509.7,626.1 510.2,626.1 510.7,626.1 511.2,626.1 511.7,626.1 512.2,626.1 512.7,626.1 513.2,626.1 513.7,626.0 514.2,626.0 514.7,626.0 515.2,626.0 515.7,626.0 516.2,626.0 516.7,626.0 517.2,626.0 517.7,626.0 518.2,626.0 518.7,626.0 519.2,626.0 519.7,626.0 520.2,625.9 520.7,625.9 521.2,625.9 521.7,625.9 522.2,625.9 522.7,625.9 523.2,625.9 523.7,625.9 524.2,625.9 524.7,625.9 525.2,625.8 525.7,625.8 526.2,625.8 526.7,625.8 527.2,625.8 527.7,625.7 528.2,625.7 528.7,625.7 529.2,625.7 529.7,625.6 530.2,625.6 530.7,625.6 531.2,625.5 531.7,625.5 532.2,625.4 532.7,625.4 533.2,625.3 533.7,625.3 534.2,625.2 534.7,625.2 535.2,625.1 535.7,625.1 536.2,625.0 536.7,625.0 537.2,624.9 537.7,624.9 538.2,624.8 538.7,624.8 539.2,624.7 539.7,624.6 540.2,624.6 540.7,624.5 541.2,624.5 541.7,624.4 542.2,624.4 542.7,624.3 543.2,624.2 543.7,624.2 544.2,624.1 544.7,624.1 545.2,624.0 545.7,624.0 546.2,623.9 546.7,623.8 547.2,623.8 547.7,623.7 548.2,623.7 548.7,623.6 549.2,623.5 549.7,623.5 550.2,623.4 550.7,623.3 551.2,623.3 551.7,623.2 552.2,623.1 552.7,623.1 553.2,623.0 553.7,622.9 554.2,622.8 554.7,622.8 555.2,622.7 555.7,622.6 556.2,622.6 556.7,622.5 557.2,622.4 557.7,622.4 558.2,622.3 558.7,622.3 559.2,622.2 559.7,622.1 560.2,622.1 560.7,622.0 561.2,622.0 561.7,621.9 562.2,621.9 562.7,621.8 563.2,621.7 563.7,621.7 564.2,621.6 564.7,621.6 565.2,621.5 565.7,621.5 566.2,621.4 566.7,621.4 567.2,621.3 567.7,621.3 568.2,621.2 568.7,621.2 569.2,621.1 569.7,621.1 570.2,621.0 570.7,621.0 571.2,620.9 571.7,620.9 572.2,620.8 572.7,620.8 573.2,620.7 573.7,620.7 574.2,620.6 574.7,620.6 575.2,620.5 575.7,620.5 576.2,620.4 576.7,620.4 577.2,620.3 577.7,620.3 578.2,620.2 578.7,620.2 579.2,620.1 579.7,620.1 580.2,620.0 580.7,620.0 581.2,619.9 581.7,619.9 582.2,619.8 582.7,619.8 583.2,619.7 583.7,619.7 584.2,619.6 584.7,619.6 585.2,619.5 585.7,619.5 586.2,619.4 586.7,619.3 587.2,619.3 587.7,619.2 588.2,619.2 588.7,619.1 589.2,619.1 589.7,619.0 590.2,619.0 590.7,618.9 591.2,618.8 591.7,618.8 592.2,618.7 592.7,618.7 593.2,618.6 593.7,618.5 594.2,618.5 594.7,618.4 595.2,618.3 595.7,618.2 596.2,618.2 596.7,618.1 597.2,618.0 597.7,617.9 598.2,617.8 598.7,617.7 599.2,617.6 599.7,617.6 600.2,617.5 600.7,617.4 601.2,617.3 601.7,617.2 602.2,617.1 602.7,617.0 603.2,616.9 603.7,616.8 604.2,616.7 604.7,616.6 605.2,616.5 605.7,616.4 606.2,616.3 606.7,616.2 607.2,616.1 607.7,616.0 608.2,615.9 608.7,615.8 609.2,615.7 609.7,615.6 610.2,615.6 610.7,615.5 611.2,615.4 611.7,615.3 612.2,615.2 612.7,615.2 613.2,615.1 613.7,615.0 614.2,614.9 614.7,614.8 615.2,614.8 615.7,614.7 616.2,614.6 616.7,614.5 617.2,614.5 617.7,614.4 618.2,614.3 618.7,614.2 619.2,614.2 619.7,614.1 620.2,614.0 620.7,613.9 621.2,613.9 621.7,613.8 622.2,613.7 622.7,613.6 623.2,613.6 623.7,613.5 624.2,613.4 624.7,613.3 625.2,613.3 625.7,613.2 626.2,613.1 626.7,613.0 627.2,612.9 627.7,612.9 628.2,612.8 628.7,612.7 629.2,612.6 629.7,612.6 630.2,612.5 630.7,612.4 631.2,612.3 631.7,612.2 632.2,612.1 632.7,612.1 633.2,612.0 633.7,611.9 634.2,611.8 634.7,611.7 635.2,611.6 635.7,611.6 636.2,611.5 636.7,611.4 637.2,611.3 637.7,611.2 638.2,611.1 638.7,611.1 639.2,611.0 639.7,610.9 640.2,610.8 640.7,610.7 641.2,610.6 641.7,610.5 642.2,610.4 642.7,610.4 643.2,610.3 643.7,610.2 644.2,610.1 644.7,610.0 645.2,609.9 645.7,609.8 646.2,609.7 646.7,609.6 647.2,609.6 647.7,609.5 648.2,609.4 648.7,609.3 649.2,609.2 649.7,609.1 650.2,609.0 650.7,608.9 651.2,608.8 651.7,608.7 652.2,608.6 652.7,608.5 653.2,608.4 653.7,608.3 654.2,608.2 654.7,608.1 655.2,608.0 655.7,607.9 656.2,607.8 656.7,607.7 657.2,607.6 657.7,607.5 658.2,607.4 658.7,607.2 659.2,607.1 659.7,607.0 660.2,606.9 660.7,606.8 661.2,606.7 661.7,606.6 662.2,606.4 662.7,606.3 663.2,606.2 663.7,606.1 664.2,606.0 664.7,605.9 665.2,605.7 665.7,605.6 666.2,605.5 666.7,605.4 667.2,605.3 667.7,605.2 668.2,605.1 668.7,604.9 669.2,604.8 669.7,604.7 670.2,604.6 670.7,604.5 671.2,604.4 671.7,604.3 672.2,604.2 672.7,604.1 673.2,603.9 673.7,603.8 674.2,603.7 674.7,603.6 675.2,603.5 675.7,603.4 676.2,603.3 676.7,603.2 677.2,603.1 677.7,603.0 678.2,602.8 678.7,602.7 679.2,602.6 679.7,602.5 680.2,602.4 680.7,602.3 681.2,602.2 681.7,602.1 682.2,602.0 682.7,601.9 683.2,601.8 683.7,601.7 684.2,601.6 684.7,601.5 685.2,601.4 685.7,601.3 686.2,601.2 686.7,601.1 687.2,601.0 687.7,601.0 688.2,600.9 688.7,600.8 689.2,600.8 689.7,600.7 690.2,600.7 690.7,600.6 691.2,600.6 691.7,600.5 692.2,600.5 692.7,600.4 693.2,600.4 693.7,600.3 694.2,600.2 694.7,600.2 695.2,600.1 695.7,599.9 696.2,599.6 696.7,599.3 697.2,598.9 697.7,598.5 698.2,598.1 698.7,597.8 699.2,597.4 699.7,597.2 700.2,597.0 700.7,596.9 701.2,596.8 701.7,596.7 702.2,596.5 702.7,596.4 703.2,596.3 703.7,596.2 704.2,596.1 704.7,596.1 705.2,596.0 705.7,595.9 706.2,595.8 706.7,595.8 707.2,595.7 707.7,595.6 708.2,595.6 708.7,595.5 709.2,595.4 709.7,595.4 710.2,595.3 710.7,595.2 711.2,595.2 711.7,595.1 712.2,595.0 712.7,595.0 713.2,594.9 713.7,594.8 714.2,594.7 714.7,594.7 715.2,594.6 715.7,594.5 716.2,594.4 716.7,594.3 717.2,594.2 717.7,594.1 718.2,594.0 718.7,594.0 719.2,593.9 719.7,593.8 720.2,593.7 720.7,593.6 721.2,593.5 721.7,593.5 722.2,593.4 722.7,593.3 723.2,593.2 723.7,593.1 724.2,593.0 724.7,593.0 725.2,592.9 725.7,592.8 726.2,592.7 726.7,592.6 727.2,592.5 727.7,592.4 728.2,592.4 728.7,592.3 729.2,592.2 729.7,592.1 730.2,592.0 730.7,591.9 731.2,591.8 731.7,591.7 732.2,591.6 732.7,591.5 733.2,591.4 733.7,591.3 734.2,591.2 734.7,591.1 735.2,591.0 735.7,590.9 736.2,590.8 736.7,590.6 737.2,590.5 737.7,590.4 738.2,590.3 738.7,590.2 739.2,590.0 739.7,589.9 740.2,589.8 740.7,589.6 741.2,589.5 741.7,589.3 742.2,589.2 742.7,589.0 743.2,588.9 743.7,588.7 744.2,588.4 744.7,588.2 745.2,588.0 745.7,587.7 746.2,587.5 746.7,587.2 747.2,586.9 747.7,586.7 748.2,586.4 748.7,586.2 749.2,586.0 749.7,585.8 750.2,585.6 750.7,585.5 751.2,585.3 751.7,585.2 752.2,585.1 752.7,584.9 753.2,584.8 753.7,584.7 754.2,584.6 754.7,584.4 755.2,584.3 755.7,584.2 756.2,584.1 756.7,584.0 757.2,583.9 757.7,583.8 758.2,583.7 758.7,583.5 759.2,583.4 759.7,583.3 760.2,583.1 760.7,583.0 761.2,582.9 761.7,582.7 762.2,582.6 762.7,582.4 763.2,582.3 763.7,582.1 764.2,582.0 764.7,581.8 765.2,581.7 765.7,581.5 766.2,581.3 766.7,581.2 767.2,581.0 767.7,580.9 768.2,580.7 768.7,580.5 769.2,580.4 769.7,580.2 770.2,580.1 770.7,579.9 771.2,579.8 771.7,579.6 772.2,579.5 772.7,579.3 773.2,579.2 773.7,579.1 774.2,578.9 774.7,578.8 775.2,578.7 775.7,578.5 776.2,578.4 776.7,578.3 777.2,578.2 777.7,578.1 778.2,578.0 778.7,577.9 779.2,577.7 779.7,577.6 780.2,577.5 780.7,577.4 781.2,577.3 781.7,577.2 782.2,577.1 782.7,577.0 783.2,576.9 783.7,576.9 784.2,576.8 784.7,576.7 785.2,576.6 785.7,576.5 786.2,576.4 786.7,576.3 787.2,576.2 787.7,576.1 788.2,576.0 788.7,575.8 789.2,575.7 789.7,575.6 790.2,575.5 790.7,575.4 791.2,575.3 791.7,575.2 792.2,575.0 792.7,574.9 793.2,574.8 793.7,574.6 794.2,574.5 794.7,574.3 795.2,574.2 795.7,574.0 796.2,573.9 796.7,573.7 797.2,573.5 797.7,573.4 798.2,573.2 798.7,573.0 799.2,572.7 799.7,572.5 800.2,572.2 800.7,571.9 801.2,571.6 801.7,571.2 802.2,570.9 802.7,570.5 803.2,570.2 803.7,569.9 804.2,569.6 804.7,569.3 805.2,569.0 805.7,568.8 806.2,568.5 806.7,568.3 807.2,568.0 807.7,567.8 808.2,567.5 808.7,567.3 809.2,567.1 809.7,566.8 810.2,566.6 810.7,566.4 811.2,566.2 811.7,566.0 812.2,565.8 812.7,565.6 813.2,565.4 813.7,565.3 814.2,565.1 814.7,564.9 815.2,564.8 815.7,564.7 816.2,564.5 816.7,564.4 817.2,564.3 817.7,564.1 818.2,564.0 818.7,563.9 819.2,563.8 819.7,563.7 820.2,563.5 820.7,563.4 821.2,563.3 821.7,563.2 822.2,563.1 822.7,563.0 823.2,562.9 823.7,562.8 824.2,562.7 824.7,562.5 825.2,562.4 825.7,562.3 826.2,562.2 826.7,562.0 827.2,561.9 827.7,561.8 828.2,561.6 828.7,561.5 829.2,561.3 829.7,561.1 830.2,561.0 830.7,560.8 831.2,560.6 831.7,560.4 832.2,560.2 832.7,559.9 833.2,559.7 833.7,559.4 834.2,559.2 834.7,558.9 835.2,558.6 835.7,558.3 836.2,558.1 836.7,557.8 837.2,557.5 837.7,557.2 838.2,556.9 838.7,556.6 839.2,556.3 839.7,556.0 840.2,555.7 840.7,555.4 841.2,555.1 841.7,554.9 842.2,554.6 842.7,554.3 843.2,554.1 843.7,553.8 844.2,553.6 844.7,553.4 845.2,553.2 845.7,553.0 846.2,552.7 846.7,552.5 847.2,552.3 847.7,552.1 848.2,551.9 848.7,551.7 849.2,551.5 849.7,551.4 850.2,551.2 850.7,551.0 851.2,550.8 851.7,550.6 852.2,550.4 852.7,550.2 853.2,550.1 853.7,549.9 854.2,549.7 854.7,549.5 855.2,549.3 855.7,549.2 856.2,549.0 856.7,548.8 857.2,548.6 857.7,548.4 858.2,548.2 858.7,548.0 859.2,547.8 859.7,547.6 860.2,547.4 860.7,547.2 861.2,547.0 861.7,546.8 862.2,546.5 862.7,546.3 863.2,546.1 863.7,545.8 864.2,545.6 864.7,545.3 865.2,545.1 865.7,544.8 866.2,544.5 866.7,544.3 867.2,544.0 867.7,543.8 868.2,543.5 868.7,543.3 869.2,543.0 869.7,542.8 870.2,542.6 870.7,542.4 871.2,542.2 871.7,542.0 872.2,541.8 872.7,541.6 873.2,541.4 873.7,541.2 874.2,541.0 874.7,540.8 875.2,540.7 875.7,540.5 876.2,540.2 876.7,540.0 877.2,539.8 877.7,539.6 878.2,539.3 878.7,539.0 879.2,538.8 879.7,538.5 880.2,538.2 880.7,537.9 881.2,537.6 881.7,537.2 882.2,536.9 882.7,536.6 883.2,536.3 883.7,536.0 884.2,535.6 884.7,535.3 885.2,535.0 885.7,534.6 886.2,534.3 886.7,534.0 887.2,533.7 887.7,533.4 888.2,533.1 888.7,532.8 889.2,532.5 889.7,532.2 890.2,531.9 890.7,531.6 891.2,531.3 891.7,531.1 892.2,530.8 892.7,530.5 893.2,530.2 893.7,529.9 894.2,529.7 894.7,529.4 895.2,529.2 895.7,528.9 896.2,528.6 896.7,528.4 897.2,528.2 897.7,527.9 898.2,527.7 898.7,527.4 899.2,527.2 899.7,527.0 900.2,526.8 900.7,526.5 901.2,526.3 901.7,526.1 902.2,525.9 902.7,525.6 903.2,525.4 903.7,525.2 904.2,525.0 904.7,524.7 905.2,524.5 905.7,524.3 906.2,524.1 906.7,523.8 907.2,523.6 907.7,523.4 908.2,523.1 908.7,522.9 909.2,522.7 909.7,522.4 910.2,522.2 910.7,522.0 911.2,521.8 911.7,521.6 912.2,521.4 912.7,521.1 913.2,520.9 913.7,520.7 914.2,520.5 914.7,520.3 915.2,520.1 915.7,519.8 916.2,519.6 916.7,519.4 917.2,519.1 917.7,518.9 918.2,518.6 918.7,518.4 919.2,518.1 919.7,517.8 920.2,517.6 920.7,517.3 921.2,517.0 921.7,516.7 922.2,516.3 922.7,516.0 923.2,515.6 923.7,515.1 924.2,514.7 924.7,514.2 925.2,513.8 925.7,513.3 926.2,512.8 926.7,512.4 927.2,512.0 927.7,511.6 928.2,511.2 928.7,510.8 929.2,510.5 929.7,510.1 930.2,509.8 930.7,509.5 931.2,509.1 931.7,508.8 932.2,508.5 932.7,508.2 933.2,507.9 933.7,507.5 934.2,507.2 934.7,506.9 935.2,506.6 935.7,506.3 936.2,506.0 936.7,505.7 937.2,505.4 937.7,505.1 938.2,504.8 938.7,504.5 939.2,504.2 939.7,503.9 940.2,503.6 940.7,503.3 941.2,503.0 941.7,502.7 942.2,502.3 942.7,502.0 943.2,501.7 943.7,501.3 944.2,501.0 944.7,500.6 945.2,500.2 945.7,499.8 946.2,499.5 946.7,499.1 947.2,498.7 947.7,498.3 948.2,497.9 948.7,497.5 949.2,497.1 949.7,496.8 950.2,496.4 950.7,496.1 951.2,495.8 951.7,495.5 952.2,495.2 952.7,494.9 953.2,494.7 953.7,494.4 954.2,494.2 954.7,494.0 955.2,493.8 955.7,493.6 956.2,493.3 956.7,493.1 957.2,492.9 957.7,492.7 958.2,492.5 958.7,492.3 959.2,492.0 959.7,491.8 960.2,491.5 960.7,491.2 961.2,490.9 961.7,490.7 962.2,490.4 962.7,490.1 963.2,489.8 963.7,489.4 964.2,489.1 964.7,488.8 965.2,488.5 965.7,488.2 966.2,487.8 966.7,487.5 967.2,487.2 967.7,486.8 968.2,486.5 968.7,486.1 969.2,485.8 969.7,485.4 970.2,485.1 970.7,484.7 971.2,484.4 971.7,484.0 972.2,483.7 972.7,483.3 973.2,482.9 973.7,482.6 974.2,482.2 974.7,481.8 975.2,481.4 975.7,481.0 976.2,480.6 976.7,480.2 977.2,479.8 977.7,479.4 978.2,479.0 978.7,478.6 979.2,478.2 979.7,477.8 980.2,477.4 980.7,477.0 981.2,476.6 981.7,476.2 982.2,475.8 982.7,475.4 983.2,475.0 983.7,474.6 984.2,474.2 984.7,473.9 985.2,473.5 985.7,473.2 986.2,472.9 986.7,472.5 987.2,472.2 987.7,471.9 988.2,471.6 988.7,471.3 989.2,471.0 989.7,470.7 990.2,470.3 990.7,470.0 991.2,469.7 991.7,469.4 992.2,469.1 992.7,468.7 993.2,468.4 993.7,468.0 994.2,467.7 994.7,467.3 995.2,466.9 995.7,466.5 996.2,466.1 996.7,465.6 997.2,465.1 997.7,464.6 998.2,464.0 998.7,463.4 999.2,462.8 999.7,462.2 1000.2,461.6 1000.7,461.0 1001.2,460.5 1001.7,460.0 1002.2,459.6 1002.7,459.2 1003.2,458.8 1003.7,458.4 1004.2,458.0 1004.7,457.7 1005.2,457.3 1005.7,457.0 1006.2,456.6 1006.7,456.3 1007.2,456.0 1007.7,455.6 1008.2,455.2 1008.7,454.9 1009.2,454.5 1009.7,454.1 1010.2,453.7 1010.7,453.2 1011.2,452.8 1011.7,452.4 1012.2,452.0 1012.7,451.5 1013.2,451.1 1013.7,450.6 1014.2,450.2 1014.7,449.7 1015.2,449.3 1015.7,448.8 1016.2,448.4 1016.7,447.9 1017.2,447.5 1017.7,447.0 1018.2,446.6 1018.7,446.1 1019.2,445.6 1019.7,445.1 1020.2,444.7 1020.7,444.2 1021.2,443.7 1021.7,443.2 1022.2,442.7 1022.7,442.2 1023.2,441.7 1023.7,441.3 1024.2,440.8 1024.7,440.3 1025.2,439.9 1025.7,439.4 1026.2,439.0 1026.7,438.5 1027.2,438.1 1027.7,437.7 1028.2,437.3 1028.7,436.9 1029.2,436.5 1029.7,436.1 1030.2,435.8 1030.7,435.4 1031.2,435.1 1031.7,434.7 1032.2,434.4 1032.7,434.0 1033.2,433.6 1033.7,433.3 1034.2,432.9 1034.7,432.5 1035.2,432.1 1035.7,431.7 1036.2,431.3 1036.7,430.8 1037.2,430.3 1037.7,429.8 1038.2,429.3 1038.7,428.8 1039.2,428.2 1039.7,427.7 1040.2,427.1 1040.7,426.5 1041.2,425.9 1041.7,425.4 1042.2,424.8 1042.7,424.2 1043.2,423.7 1043.7,423.2 1044.2,422.7 1044.7,422.2 1045.2,421.8 1045.7,421.3 1046.2,420.9 1046.7,420.5 1047.2,420.1 1047.7,419.7 1048.2,419.3 1048.7,418.9 1049.2,418.5 1049.7,418.1 1050.2,417.7 1050.7,417.3 1051.2,416.8 1051.7,416.4 1052.2,416.0 1052.7,415.5 1053.2,415.0 1053.7,414.6 1054.2,414.1 1054.7,413.6 1055.2,413.0 1055.7,412.5 1056.2,412.0 1056.7,411.5 1057.2,411.0 1057.7,410.4 1058.2,409.9 1058.7,409.4 1059.2,408.8 1059.7,408.3 1060.2,407.8 1060.7,407.3 1061.2,406.7 1061.7,406.2 1062.2,405.7 1062.7,405.2 1063.2,404.7 1063.7,404.1 1064.2,403.6 1064.7,403.1 1065.2,402.5 1065.7,402.0 1066.2,401.5 1066.7,401.0 1067.2,400.4 1067.7,399.9 1068.2,399.4 1068.7,398.9 1069.2,398.3 1069.7,397.8 1070.2,397.3 1070.7,396.8 1071.2,396.2 1071.7,395.7 1072.2,395.2 1072.7,394.7 1073.2,394.2 1073.7,393.6 1074.2,393.1 1074.7,392.6 1075.2,392.0 1075.7,391.5 1076.2,391.0 1076.7,390.4 1077.2,389.9 1077.7,389.4 1078.2,388.8 1078.7,388.3 1079.2,387.7 1079.7,387.2 1080.2,386.6 1080.7,386.1 1081.2,385.5 1081.7,384.9 1082.2,384.4 1082.7,383.8 1083.2,383.2 1083.7,382.6 1084.2,382.0 1084.7,381.5 1085.2,380.9 1085.7,380.3 1086.2,379.6 1086.7,379.0 1087.2,378.4 1087.7,377.8 1088.2,377.2 1088.7,376.6 1089.2,376.0 1089.7,375.3 1090.2,374.7 1090.7,374.1 1091.2,373.5 1091.7,372.8 1092.2,372.2 1092.7,371.6 1093.2,370.9 1093.7,370.3 1094.2,369.7 1094.7,369.1 1095.2,368.4 1095.7,367.8 1096.2,367.2 1096.7,366.6 1097.2,366.0 1097.7,365.3 1098.2,364.7 1098.7,364.1 1099.2,363.4 1099.7,362.8 1100.2,362.2 1100.7,361.6 1101.2,360.9 1101.7,360.3 1102.2,359.7 1102.7,359.0 1103.2,358.4 1103.7,357.8 1104.2,357.1 1104.7,356.5 1105.2,355.9 1105.7,355.3 1106.2,354.6 1106.7,354.0 1107.2,353.4 1107.7,352.8 1108.2,352.2 1108.7,351.6 1109.2,350.9 1109.7,350.3 1110.2,349.7 1110.7,349.1 1111.2,348.5 1111.7,347.9 1112.2,347.3 1112.7,346.7 1113.2,346.1 1113.7,345.5 1114.2,344.9 1114.7,344.3 1115.2,343.7 1115.7,343.1 1116.2,342.5 1116.7,341.9 1117.2,341.3 1117.7,340.7 1118.2,340.1 1118.7,339.5 1119.2,338.9 1119.7,338.3 1120.2,337.7 1120.7,337.1 1121.2,336.5 1121.7,335.9 1122.2,335.3 1122.7,334.7 1123.2,334.1 1123.7,333.5 1124.2,332.9 1124.7,332.3 1125.2,331.8 1125.7,331.2 1126.2,330.6 1126.7,330.0 1127.2,329.4 1127.7,328.8 1128.2,328.2 1128.7,327.6 1129.2,327.0 1129.7,326.4 1130.2,325.8 1130.7,325.2 1131.2,324.5 1131.7,323.9 1132.2,323.3 1132.7,322.6 1133.2,322.0 1133.7,321.3 1134.2,320.7 1134.7,320.0 1135.2,319.4 1135.7,318.7 1136.2,318.0 1136.7,317.3 1137.2,316.6 1137.7,315.9 1138.2,315.2 1138.7,314.5 1139.2,313.7 1139.7,312.9 1140.2,312.0 1140.7,311.2 1141.2,310.3 1141.7,309.4 1142.2,308.4 1142.7,307.6 1143.2,306.7 1143.7,305.8 1144.2,305.1 1144.7,304.3 1145.2,303.6 1145.7,302.9 1146.2,302.3 1146.7,301.7 1147.2,301.0 1147.7,300.4 1148.2,299.8 1148.7,299.2 1149.2,298.5 1149.7,297.8 1150.2,297.0 1150.7,296.2 1151.2,295.4 1151.7,294.5 1152.2,293.6 1152.7,292.6 1153.2,291.6 1153.7,290.5 1154.2,289.4 1154.7,288.3 1155.2,287.2 1155.7,286.0 1156.2,284.7 1156.7,283.4 1157.2,282.0 1157.7,280.5 1158.2,278.9 1158.7,277.2 1159.2,275.3 1159.7,273.2 1160.2,270.7 1160.7,268.1 1161.2,264.3 1161.7,254.7 1161.8,251.5" fill="none" stroke="#c8c800" stroke-width="1" shape-rendering="crispEdges" stroke-linejoin="round"/><polyline points="70.0,626.6 70.5,626.5 71.0,626.4 71.5,626.3 72.0,626.3 72.5,626.2 73.0,626.1 73.5,626.0 74.0,625.9 74.5,625.9 75.0,625.8 75.5,625.7 76.0,625.7 76.5,625.6 77.0,625.5 77.5,625.4 78.0,625.4 78.5,625.3 79.0,625.3 79.5,625.2 80.0,625.1 80.5,625.1 81.0,625.0 81.5,625.0 82.0,624.9 82.5,624.9 83.0,624.8 83.5,624.7 84.0,624.7 84.5,624.6 85.0,624.6 85.5,624.5 86.0,624.5 86.5,624.4 87.0,624.4 87.5,624.4 88.0,624.3 88.5,624.3 89.0,624.2 89.5,624.2 90.0,624.2 90.5,624.1 91.0,624.1 91.5,624.0 92.0,624.0 92.5,624.0 93.0,623.9 93.5,623.9 94.0,623.9 94.5,623.8 95.0,623.8 95.5,623.7 96.0,623.7 96.5,623.7 97.0,623.6 97.5,623.6 98.0,623.6 98.5,623.5 99.0,623.5 99.5,623.4 100.0,623.4 100.5,623.4 101.0,623.3 101.5,623.3 102.0,623.2 102.5,623.2 103.0,623.1 103.5,623.1 104.0,623.0 104.5,623.0 105.0,622.9 105.5,622.9 106.0,622.8 106.5,622.8 107.0,622.7 107.5,622.6 108.0,622.6 108.5,622.5 109.0,622.5 109.5,622.4 110.0,622.3 110.5,622.3 111.0,622.2 111.5,622.2 112.0,622.1 112.5,622.0 113.0,622.0 113.5,621.9 114.0,621.8 114.5,621.8 115.0,621.7 115.5,621.6 116.0,621.5 116.5,621.5 117.0,621.4 117.5,621.3 118.0,621.2 118.5,621.2 119.0,621.1 119.5,621.0 120.0,620.9 120.5,620.8 121.0,620.7 121.5,620.7 122.0,620.6 122.5,620.5 123.0,620.4 123.5,620.3 124.0,620.2 124.5,620.1 125.0,620.0 125.5,619.9 126.0,619.8 126.5,619.6 127.0,619.5 127.5,619.4 128.0,619.2 128.5,619.1 129.0,619.0 129.5,618.8 130.0,618.7 130.5,618.5 131.0,618.4 131.5,618.2 132.0,618.0 132.5,617.9 133.0,617.8 133.5,617.6 134.0,617.5 134.5,617.3 135.0,617.2 135.5,617.1 136.0,616.9 136.5,616.8 137.0,616.7 137.5,616.6 138.0,616.5 138.5,616.4 139.0,616.3 139.5,616.1 140.0,616.0 140.5,615.9 141.0,615.8 141.5,615.7 142.0,615.6 142.5,615.4 143.0,615.3 143.5,615.2 144.0,615.0 144.5,614.9 145.0,614.7 145.5,614.6 146.0,614.4 146.5,614.2 147.0,614.0 147.5,613.8 148.0,613.6 148.5,613.4 149.0,613.1 149.5,612.8 150.0,612.5 150.5,612.2 151.0,611.9 151.5,611.6 152.0,611.2 152.5,610.9 153.0,610.5 153.5,610.2 154.0,609.8 154.5,609.4 155.0,609.0 155.5,608.6 156.0,608.2 156.5,607.8 157.0,607.4 157.5,607.0 158.0,606.7 158.5,606.3 159.0,605.9 159.5,605.5 160.0,605.1 160.5,604.7 161.0,604.4 161.5,604.0 162.0,603.6 162.5,603.3 163.0,603.0 163.5,602.6 164.0,602.3 164.5,602.0 165.0,601.7 165.5,601.4 166.0,601.1 166.5,600.8 167.0,600.5 167.5,600.1 168.0,599.8 168.5,599.5 169.0,599.2 169.5,598.8 170.0,598.5 170.5,598.1 171.0,597.7 171.5,597.4 172.0,596.9 172.5,596.5 173.0,596.1 173.5,595.6 174.0,595.1 174.5,594.5 175.0,593.9 175.5,593.2 176.0,592.5 176.5,591.9 177.0,591.2 177.5,590.5 178.0,589.9 178.5,589.3 179.0,588.7 179.5,588.1 180.0,587.4 180.5,586.7 181.0,586.0 181.5,585.1 182.0,584.2 182.5,583.2 183.0,582.2 183.5,581.3 184.0,580.4 184.5,579.6 185.0,578.8 185.5,578.0 186.0,577.2 186.5,576.4 187.0,575.6 187.5,574.7 188.0,573.7 188.5,572.7 189.0,571.6 189.5,570.2 190.0,568.6 190.5,566.8 191.0,564.9 191.5,562.9 192.0,560.8 192.5,558.5 193.0,556.3 193.5,554.0 194.0,551.7 194.5,549.5 195.0,547.3 195.5,545.1 196.0,542.9 196.5,540.6 197.0,538.3 197.5,535.9 198.0,533.5 198.5,530.9 199.0,528.3 199.5,525.5 200.0,522.6 200.5,519.5 201.0,516.3 201.5,513.0 202.0,509.8 202.5,506.5 203.0,503.3 203.5,500.3 204.0,497.5 204.5,494.6 205.0,491.7 205.5,488.6 206.0,485.2 206.5,481.4 207.0,477.2 207.5,472.0 208.0,464.8 208.5,456.7 209.0,448.0 209.5,439.4 210.0,430.8 210.5,422.8 211.0,415.4 211.5,408.3 212.0,401.4 212.5,394.7 213.0,388.3 213.5,382.1 214.0,376.1 214.5,370.5 215.0,365.1 215.5,359.7 216.0,354.4 216.5,349.4 217.0,344.7 217.5,340.5 218.0,336.8 218.5,333.7 219.0,331.3 219.3,330.0 219.8,331.8 220.3,334.0 220.8,336.6 221.3,339.7 221.8,343.2 222.3,347.1 222.8,351.4 223.3,356.0 223.8,360.9 224.3,366.1 224.8,371.8 225.3,378.7 225.8,386.4 226.3,394.7 226.8,403.1 227.3,411.2 227.8,418.6 228.3,425.2 228.8,431.3 229.3,437.2 229.8,442.8 230.3,448.0 230.8,452.6 231.3,457.0 231.8,462.4 232.3,469.4 232.8,475.3 233.3,479.9 233.8,484.1 234.3,487.9 234.8,491.4 235.3,494.8 235.8,498.2 236.3,501.6 236.8,505.2 237.3,509.0 237.8,512.9 238.3,516.8 238.8,520.6 239.3,524.3 239.8,527.7 240.3,530.8 240.8,533.7 241.3,536.6 241.8,539.3 242.3,542.0 242.8,544.5 243.3,547.0 243.8,549.4 244.3,551.8 244.8,554.1 245.3,556.4 245.8,558.7 246.3,560.8 246.8,562.9 247.3,564.8 247.8,566.6 248.3,568.2 248.8,569.6 249.3,570.8 249.8,572.0 250.3,573.2 250.8,574.4 251.3,575.6 251.8,576.8 252.3,577.9 252.8,579.1 253.3,580.4 253.8,581.6 254.3,582.9 254.8,584.3 255.3,585.6 255.8,586.9 256.3,588.2 256.8,589.5 257.3,590.7 257.8,592.0 258.3,593.2 258.8,594.4 259.3,595.4 259.8,596.4 260.3,597.3 260.8,598.2 261.3,599.0 261.8,599.9 262.3,600.7 262.8,601.5 263.3,602.3 263.8,603.0 264.3,603.7 264.8,604.4 265.3,605.0 265.8,605.6 266.3,606.2 266.8,606.7 267.3,607.1 267.8,607.5 268.3,607.8 268.8,608.1 269.3,608.3 269.8,608.5 270.3,608.7 270.8,608.9 271.3,609.0 271.8,609.2 272.3,609.4 272.8,609.6 273.3,609.9 273.8,610.2 274.3,610.5 274.8,611.0 275.3,611.4 275.8,611.9 276.3,612.4 276.8,612.9 277.3,613.4 277.8,613.9 278.3,614.5 278.8,615.0 279.3,615.5 279.8,616.0 280.3,616.5 280.8,617.0 281.3,617.4 281.8,617.8 282.3,618.2 282.8,618.4 283.3,618.7 283.8,618.9 284.3,619.1 284.8,619.3 285.3,619.4 285.8,619.6 286.3,619.7 286.8,619.9 287.3,620.0 287.8,620.2 288.3,620.3 288.8,620.5 289.3,620.7 289.8,620.9 290.3,621.1 290.8,621.4 291.3,621.6 291.8,621.9 292.3,622.2 292.8,622.5 293.3,622.8 293.8,623.1 294.3,623.4 294.8,623.6 295.3,623.8 295.8,624.0 296.3,624.2 296.8,624.3 297.3,624.5 297.8,624.6 298.3,624.7 298.8,624.9 299.3,625.0 299.8,625.1 300.3,625.2 300.8,625.3 301.3,625.4 301.8,625.5 302.3,625.6 302.8,625.7 303.3,625.7 303.8,625.8 304.3,625.9 304.8,626.0 305.3,626.1 305.8,626.2 306.3,626.3 306.8,626.4 307.3,626.4 307.8,626.5 308.3,626.6 308.8,626.7 309.3,626.8 309.8,627.0 310.3,627.1 310.8,627.2 311.3,627.3 311.8,627.4 312.3,627.5 312.8,627.6 313.3,627.8 313.8,627.9 314.3,628.0 314.8,628.1 315.3,628.2 315.8,628.3 316.3,628.4 316.8,628.5 317.3,628.6 317.8,628.7 318.3,628.8 318.8,628.8 319.3,628.9 319.8,629.0 320.3,629.0 320.8,629.1 321.3,629.1 321.8,629.2 322.3,629.2 322.8,629.3 323.3,629.3 323.8,629.4 324.3,629.4 324.8,629.5 325.3,629.5 325.8,629.5 326.3,629.6 326.8,629.6 327.3,629.6 327.8,629.7 328.3,629.7 328.8,629.7 329.3,629.8 329.8,629.8 330.3,629.8 330.8,629.9 331.3,629.9 331.8,629.9 332.3,630.0 332.8,630.0 333.3,630.0 333.8,630.1 334.3,630.1 334.8,630.1 335.3,630.1 335.8,630.2 336.3,630.2 336.8,630.2 337.3,630.2 337.8,630.3 338.3,630.3 338.8,630.3 339.3,630.3 339.8,630.4 340.3,630.4 340.8,630.4 341.3,630.4 341.8,630.4 342.3,630.5 342.8,630.5 343.3,630.5 343.8,630.5 344.3,630.6 344.8,630.6 345.3,630.6 345.8,630.6 346.3,630.6 346.8,630.7 347.3,630.7 347.8,630.7 348.3,630.7 348.8,630.8 349.3,630.8 349.8,630.8 350.3,630.8 350.8,630.9 351.3,630.9 351.8,630.9 352.3,631.0 352.8,631.0 353.3,631.0 353.8,631.1 354.3,631.1 354.8,631.2 355.3,631.2 355.8,631.3 356.3,631.3 356.8,631.3 357.3,631.4 357.8,631.4 358.3,631.4 358.8,631.5 359.3,631.5 359.8,631.5 360.3,631.5 360.8,631.5 361.3,631.5 361.8,631.5 362.3,631.5 362.8,631.5 363.3,631.5 363.8,631.4 364.3,631.4 364.8,631.4 365.3,631.4 365.8,631.3 366.3,631.3 366.8,631.3 367.3,631.3 367.8,631.2 368.3,631.2 368.8,631.1 369.3,631.1 369.8,631.1 370.3,631.0 370.8,631.0 371.3,630.9 371.8,630.9 372.3,630.8 372.8,630.6 373.3,630.4 373.8,630.3 374.3,630.1 374.8,629.9 375.3,629.7 375.8,629.6 376.3,629.5 376.8,629.4 377.3,629.4 377.8,629.5 378.3,629.6 378.8,629.8 379.3,630.0 379.8,630.1 380.3,630.3 380.8,630.5 381.3,630.7 381.8,630.8 382.3,630.9 382.8,630.9 383.3,630.9 383.8,630.9 384.3,630.9 384.8,630.9 385.3,630.9 385.8,630.9 386.3,630.8 386.8,630.8 387.3,630.8 387.8,630.8 388.3,630.8 388.8,630.8 389.3,630.7 389.8,630.7 390.3,630.7 390.8,630.7 391.3,630.6 391.8,630.6 392.3,630.6 392.8,630.6 393.3,630.5 393.8,630.5 394.3,630.5 394.8,630.5 395.3,630.4 395.8,630.4 396.3,630.4 396.8,630.3 397.3,630.3 397.8,630.3 398.3,630.2 398.8,630.2 399.3,630.1 399.8,630.0 400.3,630.0 400.8,629.9 401.3,629.8 401.8,629.7 402.3,629.6 402.8,629.6 403.3,629.5 403.8,629.4 404.3,629.3 404.8,629.2 405.3,629.1 405.8,629.1 406.3,629.0 406.8,628.9 407.3,628.9 407.8,628.8 408.3,628.8 408.8,628.7 409.3,628.7 409.8,628.7 410.3,628.7 410.8,628.7 411.3,628.8 411.8,628.9 412.3,629.0 412.8,629.1 413.3,629.2 413.8,629.4 414.3,629.5 414.8,629.5 415.3,629.6 415.8,629.6 416.3,629.6 416.8,629.6 417.3,629.5 417.8,629.5 418.3,629.5 418.8,629.4 419.3,629.3 419.8,629.3 420.3,629.2 420.8,629.1 421.3,629.0 421.8,628.9 422.3,628.8 422.8,628.8 423.3,628.7 423.8,628.6 424.3,628.5 424.8,628.4 425.3,628.3 425.8,628.2 426.3,628.2 426.8,628.1 427.3,628.0 427.8,628.0 428.3,627.9 428.8,627.9 429.3,627.8 429.8,627.8 430.3,627.8 430.8,627.8 431.3,627.8 431.8,627.8 432.3,627.8 432.8,627.8 433.3,627.8 433.8,627.9 434.3,627.9 434.8,627.9 435.3,627.9 435.8,627.9 436.3,627.9 436.8,627.9 437.3,628.0 437.8,628.0 438.3,628.0 438.8,628.0 439.3,628.0 439.8,628.0 440.3,628.0 440.8,628.0 441.3,628.0 441.8,628.0 442.3,627.9 442.8,627.9 443.3,627.9 443.8,627.8 444.3,627.8 444.8,627.7 445.3,627.7 445.8,627.6 446.3,627.6 446.8,627.5 447.3,627.4 447.8,627.4 448.3,627.3 448.8,627.2 449.3,627.1 449.8,627.1 450.3,627.0 450.8,626.9 451.3,626.8 451.8,626.7 452.3,626.7 452.8,626.6 453.3,626.5 453.8,626.4 454.3,626.4 454.8,626.3 455.3,626.2 455.8,626.1 456.3,626.0 456.8,625.9 457.3,625.8 457.8,625.7 458.3,625.6 458.8,625.5 459.3,625.3 459.8,625.2 460.3,625.1 460.8,624.9 461.3,624.8 461.8,624.7 462.3,624.5 462.8,624.4 463.3,624.3 463.8,624.1 464.3,624.0 464.8,623.9 465.3,623.8 465.8,623.7 466.3,623.6 466.8,623.5 467.3,623.4 467.8,623.4 468.3,623.3 468.8,623.3 469.3,623.3 469.8,623.3 470.3,623.3 470.8,623.3 471.3,623.3 471.8,623.3 472.3,623.3 472.8,623.3 473.3,623.3 473.8,623.3 474.3,623.3 474.8,623.3 475.3,623.3 475.8,623.3 476.3,623.3 476.8,623.3 477.3,623.4 477.8,623.4 478.3,623.4 478.8,623.4 479.3,623.4 479.8,623.4 480.3,623.4 480.8,623.5 481.3,623.5 481.8,623.5 482.3,623.5 482.8,623.5 483.3,623.6 483.8,623.6 484.3,623.6 484.8,623.6 485.3,623.6 485.8,623.7 486.3,623.7 486.8,623.7 487.3,623.7 487.8,623.8 488.3,623.8 488.8,623.8 489.3,623.9 489.8,623.9 490.3,623.9 490.8,624.0 491.3,624.0 491.8,624.1 492.3,624.1 492.8,624.2 493.3,624.3 493.8,624.3 494.3,624.4 494.8,624.5 495.3,624.5 495.8,624.6 496.3,624.7 496.8,624.7 497.3,624.8 497.8,624.9 498.3,625.0 498.8,625.1 499.3,625.2 499.8,625.3 500.3,625.4 500.8,625.6 501.3,625.7 501.8,625.9 502.3,626.0 502.8,626.2 503.3,626.3 503.8,626.4 504.3,626.5 504.8,626.5 505.3,626.5 505.8,626.5 506.3,626.5 506.8,626.5 507.3,626.5 507.8,626.5 508.3,626.5 508.8,626.5 509.3,626.5 509.8,626.5 510.3,626.5 510.8,626.5 511.3,626.5 511.8,626.5 512.3,626.5 512.8,626.5 513.3,626.5 513.8,626.4 514.3,626.4 514.8,626.4 515.3,626.4 515.8,626.4 516.3,626.4 516.8,626.4 517.3,626.4 517.8,626.4 518.3,626.4 518.8,626.4 519.3,626.4 519.8,626.4 520.3,626.3 520.8,626.3 521.3,626.3 521.8,626.3 522.3,626.3 522.8,626.3 523.3,626.3 523.8,626.3 524.3,626.3 524.8,626.3 525.3,626.2 525.8,626.2 526.3,626.2 526.8,626.2 527.3,626.2 527.8,626.1 528.3,626.1 528.8,626.1 529.3,626.1 529.8,626.0 530.3,626.0 530.8,625.9 531.3,625.9 531.8,625.9 532.3,625.8 532.8,625.8 533.3,625.7 533.8,625.7 534.3,625.6 534.8,625.6 535.3,625.5 535.8,625.5 536.3,625.4 536.8,625.4 537.3,625.3 537.8,625.3 538.3,625.2 538.8,625.1 539.3,625.1 539.8,625.0 540.3,625.0 540.8,624.9 541.3,624.9 541.8,624.8 542.3,624.7 542.8,624.7 543.3,624.6 543.8,624.6 544.3,624.5 544.8,624.5 545.3,624.4 545.8,624.4 546.3,624.3 546.8,624.2 547.3,624.2 547.8,624.1 548.3,624.0 548.8,624.0 549.3,623.9 549.8,623.9 550.3,623.8 550.8,623.7 551.3,623.6 551.8,623.6 552.3,623.5 552.8,623.4 553.3,623.4 553.8,623.3 554.3,623.2 554.8,623.2 555.3,623.1 555.8,623.0 556.3,623.0 556.8,622.9 557.3,622.8 557.8,622.8 558.3,622.7 558.8,622.6 559.3,622.6 559.8,622.5 560.3,622.5 560.8,622.4 561.3,622.4 561.8,622.3 562.3,622.2 562.8,622.2 563.3,622.1 563.8,622.1 564.3,622.0 564.8,622.0 565.3,621.9 565.8,621.9 566.3,621.8 566.8,621.8 567.3,621.7 567.8,621.7 568.3,621.6 568.8,621.6 569.3,621.5 569.8,621.5 570.3,621.4 570.8,621.4 571.3,621.3 571.8,621.3 572.3,621.2 572.8,621.2 573.3,621.1 573.8,621.1 574.3,621.0 574.8,621.0 575.3,620.9 575.8,620.9 576.3,620.8 576.8,620.8 577.3,620.7 577.8,620.7 578.3,620.6 578.8,620.6 579.3,620.5 579.8,620.5 580.3,620.4 580.8,620.4 581.3,620.3 581.8,620.3 582.3,620.2 582.8,620.2 583.3,620.1 583.8,620.1 584.3,620.0 584.8,619.9 585.3,619.9 585.8,619.8 586.3,619.8 586.8,619.7 587.3,619.7 587.8,619.6 588.3,619.6 588.8,619.5 589.3,619.5 589.8,619.4 590.3,619.4 590.8,619.3 591.3,619.2 591.8,619.2 592.3,619.1 592.8,619.0 593.3,619.0 593.8,618.9 594.3,618.8 594.8,618.8 595.3,618.7 595.8,618.6 596.3,618.6 596.8,618.5 597.3,618.4 597.8,618.3 598.3,618.2 598.8,618.1 599.3,618.0 599.8,617.9 600.3,617.8 600.8,617.7 601.3,617.6 601.8,617.5 602.3,617.4 602.8,617.3 603.3,617.2 603.8,617.1 604.3,617.0 604.8,616.9 605.3,616.8 605.8,616.7 606.3,616.6 606.8,616.6 607.3,616.5 607.8,616.4 608.3,616.3 608.8,616.2 609.3,616.1 609.8,616.0 610.3,615.9 610.8,615.9 611.3,615.8 611.8,615.7 612.3,615.6 612.8,615.5 613.3,615.5 613.8,615.4 614.3,615.3 614.8,615.2 615.3,615.2 615.8,615.1 616.3,615.0 616.8,614.9 617.3,614.8 617.8,614.8 618.3,614.7 618.8,614.6 619.3,614.5 619.8,614.5 620.3,614.4 620.8,614.3 621.3,614.2 621.8,614.2 622.3,614.1 622.8,614.0 623.3,613.9 623.8,613.9 624.3,613.8 624.8,613.7 625.3,613.6 625.8,613.6 626.3,613.5 626.8,613.4 627.3,613.3 627.8,613.3 628.3,613.2 628.8,613.1 629.3,613.0 629.8,612.9 630.3,612.9 630.8,612.8 631.3,612.7 631.8,612.6 632.3,612.5 632.8,612.4 633.3,612.4 633.8,612.3 634.3,612.2 634.8,612.1 635.3,612.0 635.8,611.9 636.3,611.9 636.8,611.8 637.3,611.7 637.8,611.6 638.3,611.5 638.8,611.4 639.3,611.4 639.8,611.3 640.3,611.2 640.8,611.1 641.3,611.0 641.8,610.9 642.3,610.8 642.8,610.7 643.3,610.7 643.8,610.6 644.3,610.5 644.8,610.4 645.3,610.3 645.8,610.2 646.3,610.1 646.8,610.0 647.3,609.9 647.8,609.8 648.3,609.7 648.8,609.7 649.3,609.6 649.8,609.5 650.3,609.4 650.8,609.3 651.3,609.2 651.8,609.1 652.3,609.0 652.8,608.9 653.3,608.8 653.8,608.7 654.3,608.6 654.8,608.5 655.3,608.4 655.8,608.3 656.3,608.2 656.8,608.1 657.3,608.0 657.8,607.8 658.3,607.7 658.8,607.6 659.3,607.5 659.8,607.4 660.3,607.3 660.8,607.2 661.3,607.1 661.8,606.9 662.3,606.8 662.8,606.7 663.3,606.6 663.8,606.5 664.3,606.4 664.8,606.2 665.3,606.1 665.8,606.0 666.3,605.9 666.8,605.8 667.3,605.7 667.8,605.5 668.3,605.4 668.8,605.3 669.3,605.2 669.8,605.1 670.3,605.0 670.8,604.9 671.3,604.8 671.8,604.7 672.3,604.5 672.8,604.4 673.3,604.3 673.8,604.2 674.3,604.1 674.8,604.0 675.3,603.9 675.8,603.8 676.3,603.7 676.8,603.6 677.3,603.4 677.8,603.3 678.3,603.2 678.8,603.1 679.3,603.0 679.8,602.9 680.3,602.8 680.8,602.7 681.3,602.6 681.8,602.5 682.3,602.4 682.8,602.3 683.3,602.1 683.8,602.1 684.3,602.0 684.8,601.9 685.3,601.8 685.8,601.7 686.3,601.6 686.8,601.5 687.3,601.4 687.8,601.4 688.3,601.3 688.8,601.2 689.3,601.1 689.8,601.1 690.3,601.0 690.8,601.0 691.3,601.0 691.8,600.9 692.3,600.9 692.8,600.8 693.3,600.8 693.8,600.7 694.3,600.6 694.8,600.5 695.3,600.4 695.8,600.2 696.3,599.9 696.8,599.6 697.3,599.2 697.8,598.8 698.3,598.4 698.8,598.1 699.3,597.8 699.8,597.6 700.3,597.4 700.8,597.3 701.3,597.2 701.8,597.0 702.3,596.9 702.8,596.8 703.3,596.7 703.8,596.6 704.3,596.5 704.8,596.4 705.3,596.4 705.8,596.3 706.3,596.2 706.8,596.1 707.3,596.1 707.8,596.0 708.3,595.9 708.8,595.9 709.3,595.8 709.8,595.8 710.3,595.7 710.8,595.6 711.3,595.6 711.8,595.5 712.3,595.4 712.8,595.4 713.3,595.3 713.8,595.2 714.3,595.1 714.8,595.0 715.3,594.9 715.8,594.9 716.3,594.8 716.8,594.7 717.3,594.6 717.8,594.5 718.3,594.4 718.8,594.3 719.3,594.3 719.8,594.2 720.3,594.1 720.8,594.0 721.3,593.9 721.8,593.8 722.3,593.8 722.8,593.7 723.3,593.6 723.8,593.5 724.3,593.4 724.8,593.3 725.3,593.3 725.8,593.2 726.3,593.1 726.8,593.0 727.3,592.9 727.8,592.8 728.3,592.7 728.8,592.7 729.3,592.6 729.8,592.5 730.3,592.4 730.8,592.3 731.3,592.2 731.8,592.1 732.3,592.0 732.8,591.9 733.3,591.8 733.8,591.7 734.3,591.6 734.8,591.5 735.3,591.4 735.8,591.2 736.3,591.1 736.8,591.0 737.3,590.9 737.8,590.8 738.3,590.7 738.8,590.5 739.3,590.4 739.8,590.3 740.3,590.1 740.8,590.0 741.3,589.9 741.8,589.7 742.3,589.6 742.8,589.4 743.3,589.2 743.8,589.0 744.3,588.8 744.8,588.6 745.3,588.3 745.8,588.1 746.3,587.8 746.8,587.5 747.3,587.3 747.8,587.0 748.3,586.8 748.8,586.6 749.3,586.4 749.8,586.2 750.3,586.0 750.8,585.8 751.3,585.7 751.8,585.6 752.3,585.4 752.8,585.3 753.3,585.2 753.8,585.1 754.3,584.9 754.8,584.8 755.3,584.7 755.8,584.6 756.3,584.5 756.8,584.4 757.3,584.3 757.8,584.2 758.3,584.0 758.8,583.9 759.3,583.8 759.8,583.7 760.3,583.5 760.8,583.4 761.3,583.2 761.8,583.1 762.3,582.9 762.8,582.8 763.3,582.6 763.8,582.5 764.3,582.3 764.8,582.2 765.3,582.0 765.8,581.9 766.3,581.7 766.8,581.5 767.3,581.4 767.8,581.2 768.3,581.1 768.8,580.9 769.3,580.8 769.8,580.6 770.3,580.4 770.8,580.3 771.3,580.1 771.8,580.0 772.3,579.8 772.8,579.7 773.3,579.6 773.8,579.4 774.3,579.3 774.8,579.2 775.3,579.0 775.8,578.9 776.3,578.8 776.8,578.7 777.3,578.6 777.8,578.4 778.3,578.3 778.8,578.2 779.3,578.1 779.8,578.0 780.3,577.9 780.8,577.8 781.3,577.7 781.8,577.6 782.3,577.5 782.8,577.4 783.3,577.3 783.8,577.2 784.3,577.1 784.8,577.0 785.3,576.9 785.8,576.8 786.3,576.7 786.8,576.6 787.3,576.5 787.8,576.4 788.3,576.3 788.8,576.2 789.3,576.1 789.8,576.0 790.3,575.9 790.8,575.8 791.3,575.7 791.8,575.5 792.3,575.4 792.8,575.3 793.3,575.1 793.8,575.0 794.3,574.9 794.8,574.7 795.3,574.6 795.8,574.4 796.3,574.2 796.8,574.1 797.3,573.9 797.8,573.7 798.3,573.5 798.8,573.3 799.3,573.1 799.8,572.8 800.3,572.5 800.8,572.2 801.3,571.9 801.8,571.5 802.3,571.2 802.8,570.9 803.3,570.5 803.8,570.2 804.3,569.9 804.8,569.6 805.3,569.4 805.8,569.1 806.3,568.9 806.8,568.6 807.3,568.4 807.8,568.1 808.3,567.9 808.8,567.7 809.3,567.4 809.8,567.2 810.3,567.0 810.8,566.8 811.3,566.6 811.8,566.4 812.3,566.2 812.8,566.0 813.3,565.8 813.8,565.6 814.3,565.5 814.8,565.3 815.3,565.2 815.8,565.0 816.3,564.9 816.8,564.8 817.3,564.6 817.8,564.5 818.3,564.4 818.8,564.3 819.3,564.1 819.8,564.0 820.3,563.9 820.8,563.8 821.3,563.7 821.8,563.6 822.3,563.5 822.8,563.4 823.3,563.3 823.8,563.1 824.3,563.0 824.8,562.9 825.3,562.8 825.8,562.7 826.3,562.5 826.8,562.4 827.3,562.3 827.8,562.1 828.3,562.0 828.8,561.8 829.3,561.7 829.8,561.5 830.3,561.3 830.8,561.2 831.3,561.0 831.8,560.7 832.3,560.5 832.8,560.3 833.3,560.0 833.8,559.8 834.3,559.5 834.8,559.2 835.3,559.0 835.8,558.7 836.3,558.4 836.8,558.1 837.3,557.8 837.8,557.5 838.3,557.2 838.8,556.9 839.3,556.6 839.8,556.3 840.3,556.0 840.8,555.8 841.3,555.5 841.8,555.2 842.3,554.9 842.8,554.7 843.3,554.4 843.8,554.2 844.3,554.0 844.8,553.7 845.3,553.5 845.8,553.3 846.3,553.1 846.8,552.9 847.3,552.7 847.8,552.5 848.3,552.3 848.8,552.1 849.3,551.9 849.8,551.7 850.3,551.5 850.8,551.3 851.3,551.2 851.8,551.0 852.3,550.8 852.8,550.6 853.3,550.4 853.8,550.2 854.3,550.1 854.8,549.9 855.3,549.7 855.8,549.5 856.3,549.3 856.8,549.1 857.3,549.0 857.8,548.8 858.3,548.6 858.8,548.4 859.3,548.2 859.8,548.0 860.3,547.8 860.8,547.6 861.3,547.3 861.8,547.1 862.3,546.9 862.8,546.7 863.3,546.4 863.8,546.2 864.3,545.9 864.8,545.7 865.3,545.4 865.8,545.2 866.3,544.9 866.8,544.6 867.3,544.4 867.8,544.1 868.3,543.9 868.8,543.6 869.3,543.4 869.8,543.2 870.3,542.9 870.8,542.7 871.3,542.5 871.8,542.3 872.3,542.1 872.8,542.0 873.3,541.8 873.8,541.6 874.3,541.4 874.8,541.2 875.3,541.0 875.8,540.8 876.3,540.6 876.8,540.4 877.3,540.1 877.8,539.9 878.3,539.6 878.8,539.4 879.3,539.1 879.8,538.8 880.3,538.5 880.8,538.2 881.3,537.9 881.8,537.6 882.3,537.3 882.8,536.9 883.3,536.6 883.8,536.3 884.3,536.0 884.8,535.6 885.3,535.3 885.8,535.0 886.3,534.7 886.8,534.3 887.3,534.0 887.8,533.7 888.3,533.4 888.8,533.1 889.3,532.8 889.8,532.5 890.3,532.3 890.8,532.0 891.3,531.7 891.8,531.4 892.3,531.1 892.8,530.8 893.3,530.6 893.8,530.3 894.3,530.0 894.8,529.8 895.3,529.5 895.8,529.2 896.3,529.0 896.8,528.8 897.3,528.5 897.8,528.3 898.3,528.0 898.8,527.8 899.3,527.6 899.8,527.3 900.3,527.1 900.8,526.9 901.3,526.7 901.8,526.4 902.3,526.2 902.8,526.0 903.3,525.8 903.8,525.5 904.3,525.3 904.8,525.1 905.3,524.9 905.8,524.6 906.3,524.4 906.8,524.2 907.3,524.0 907.8,523.7 908.3,523.5 908.8,523.3 909.3,523.0 909.8,522.8 910.3,522.6 910.8,522.4 911.3,522.1 911.8,521.9 912.3,521.7 912.8,521.5 913.3,521.3 913.8,521.1 914.3,520.8 914.8,520.6 915.3,520.4 915.8,520.2 916.3,520.0 916.8,519.7 917.3,519.5 917.8,519.2 918.3,519.0 918.8,518.7 919.3,518.5 919.8,518.2 920.3,517.9 920.8,517.6 921.3,517.3 921.8,517.0 922.3,516.7 922.8,516.3 923.3,515.9 923.8,515.4 924.3,515.0 924.8,514.5 925.3,514.1 925.8,513.6 926.3,513.1 926.8,512.7 927.3,512.3 927.8,511.9 928.3,511.5 928.8,511.2 929.3,510.8 929.8,510.5 930.3,510.1 930.8,509.8 931.3,509.5 931.8,509.1 932.3,508.8 932.8,508.5 933.3,508.2 933.8,507.9 934.3,507.6 934.8,507.3 935.3,507.0 935.8,506.7 936.3,506.4 936.8,506.1 937.3,505.8 937.8,505.5 938.3,505.2 938.8,504.9 939.3,504.6 939.8,504.3 940.3,504.0 940.8,503.6 941.3,503.3 941.8,503.0 942.3,502.7 942.8,502.3 943.3,502.0 943.8,501.7 944.3,501.3 944.8,500.9 945.3,500.6 945.8,500.2 946.3,499.8 946.8,499.4 947.3,499.0 947.8,498.6 948.3,498.2 948.8,497.8 949.3,497.5 949.8,497.1 950.3,496.7 950.8,496.4 951.3,496.1 951.8,495.8 952.3,495.5 952.8,495.3 953.3,495.0 953.8,494.8 954.3,494.6 954.8,494.3 955.3,494.1 955.8,493.9 956.3,493.7 956.8,493.5 957.3,493.3 957.8,493.1 958.3,492.8 958.8,492.6 959.3,492.4 959.8,492.1 960.3,491.8 960.8,491.6 961.3,491.3 961.8,491.0 962.3,490.7 962.8,490.4 963.3,490.1 963.8,489.8 964.3,489.5 964.8,489.2 965.3,488.8 965.8,488.5 966.3,488.2 966.8,487.8 967.3,487.5 967.8,487.2 968.3,486.8 968.8,486.5 969.3,486.1 969.8,485.8 970.3,485.4 970.8,485.1 971.3,484.7 971.8,484.4 972.3,484.0 972.8,483.6 973.3,483.3 973.8,482.9 974.3,482.5 974.8,482.1 975.3,481.7 975.8,481.3 976.3,480.9 976.8,480.5 977.3,480.1 977.8,479.7 978.3,479.3 978.8,478.9 979.3,478.5 979.8,478.1 980.3,477.7 980.8,477.3 981.3,476.9 981.8,476.5 982.3,476.1 982.8,475.7 983.3,475.3 983.8,474.9 984.3,474.6 984.8,474.2 985.3,473.9 985.8,473.5 986.3,473.2 986.8,472.9 987.3,472.5 987.8,472.2 988.3,471.9 988.8,471.6 989.3,471.3 989.8,471.0 990.3,470.7 990.8,470.4 991.3,470.0 991.8,469.7 992.3,469.4 992.8,469.1 993.3,468.7 993.8,468.4 994.3,468.0 994.8,467.6 995.3,467.2 995.8,466.8 996.3,466.4 996.8,465.9 997.3,465.4 997.8,464.9 998.3,464.3 998.8,463.7 999.3,463.0 999.8,462.4 1000.3,461.9 1000.8,461.3 1001.3,460.8 1001.8,460.3 1002.3,459.9 1002.8,459.5 1003.3,459.1 1003.8,458.7 1004.3,458.4 1004.8,458.0 1005.3,457.7 1005.8,457.3 1006.3,457.0 1006.8,456.6 1007.3,456.3 1007.8,455.9 1008.3,455.6 1008.8,455.2 1009.3,454.8 1009.8,454.4 1010.3,454.0 1010.8,453.6 1011.3,453.1 1011.8,452.7 1012.3,452.3 1012.8,451.8 1013.3,451.4 1013.8,450.9 1014.3,450.5 1014.8,450.1 1015.3,449.6 1015.8,449.1 1016.3,448.7 1016.8,448.2 1017.3,447.8 1017.8,447.3 1018.3,446.9 1018.8,446.4 1019.3,445.9 1019.8,445.4 1020.3,445.0 1020.8,444.5 1021.3,444.0 1021.8,443.5 1022.3,443.0 1022.8,442.5 1023.3,442.0 1023.8,441.6 1024.3,441.1 1024.8,440.6 1025.3,440.2 1025.8,439.7 1026.3,439.3 1026.8,438.8 1027.3,438.4 1027.8,438.0 1028.3,437.6 1028.8,437.2 1029.3,436.8 1029.8,436.5 1030.3,436.1 1030.8,435.7 1031.3,435.4 1031.8,435.0 1032.3,434.7 1032.8,434.3 1033.3,434.0 1033.8,433.6 1034.3,433.2 1034.8,432.8 1035.3,432.4 1035.8,432.0 1036.3,431.6 1036.8,431.1 1037.3,430.6 1037.8,430.1 1038.3,429.6 1038.8,429.1 1039.3,428.5 1039.8,428.0 1040.3,427.4 1040.8,426.8 1041.3,426.2 1041.8,425.7 1042.3,425.1 1042.8,424.5 1043.3,424.0 1043.8,423.5 1044.3,423.0 1044.8,422.5 1045.3,422.1 1045.8,421.6 1046.3,421.2 1046.8,420.8 1047.3,420.4 1047.8,420.0 1048.3,419.6 1048.8,419.2 1049.3,418.8 1049.8,418.4 1050.3,418.0 1050.8,417.6 1051.3,417.2 1051.8,416.7 1052.3,416.3 1052.8,415.8 1053.3,415.3 1053.8,414.9 1054.3,414.4 1054.8,413.9 1055.3,413.3 1055.8,412.8 1056.3,412.3 1056.8,411.8 1057.3,411.2 1057.8,410.7 1058.3,410.2 1058.8,409.7 1059.3,409.1 1059.8,408.6 1060.3,408.1 1060.8,407.6 1061.3,407.0 1061.8,406.5 1062.3,406.0 1062.8,405.5 1063.3,404.9 1063.8,404.4 1064.3,403.9 1064.8,403.4 1065.3,402.8 1065.8,402.3 1066.3,401.8 1066.8,401.3 1067.3,400.7 1067.8,400.2 1068.3,399.7 1068.8,399.2 1069.3,398.6 1069.8,398.1 1070.3,397.6 1070.8,397.1 1071.3,396.5 1071.8,396.0 1072.3,395.5 1072.8,395.0 1073.3,394.5 1073.8,393.9 1074.3,393.4 1074.8,392.9 1075.3,392.3 1075.8,391.8 1076.3,391.3 1076.8,390.7 1077.3,390.2 1077.8,389.6 1078.3,389.1 1078.8,388.6 1079.3,388.0 1079.8,387.5 1080.3,386.9 1080.8,386.3 1081.3,385.8 1081.8,385.2 1082.3,384.7 1082.8,384.1 1083.3,383.5 1083.8,382.9 1084.3,382.3 1084.8,381.7 1085.3,381.1 1085.8,380.5 1086.3,379.9 1086.8,379.3 1087.3,378.7 1087.8,378.1 1088.3,377.5 1088.8,376.9 1089.3,376.2 1089.8,375.6 1090.3,375.0 1090.8,374.4 1091.3,373.7 1091.8,373.1 1092.3,372.5 1092.8,371.9 1093.3,371.2 1093.8,370.6 1094.3,370.0 1094.8,369.3 1095.3,368.7 1095.8,368.1 1096.3,367.5 1096.8,366.9 1097.3,366.2 1097.8,365.6 1098.3,365.0 1098.8,364.3 1099.3,363.7 1099.8,363.1 1100.3,362.5 1100.8,361.8 1101.3,361.2 1101.8,360.6 1102.3,359.9 1102.8,359.3 1103.3,358.7 1103.8,358.1 1104.3,357.4 1104.8,356.8 1105.3,356.2 1105.8,355.5 1106.3,354.9 1106.8,354.3 1107.3,353.7 1107.8,353.1 1108.3,352.4 1108.8,351.8 1109.3,351.2 1109.8,350.6 1110.3,350.0 1110.8,349.4 1111.3,348.8 1111.8,348.2 1112.3,347.6 1112.8,347.0 1113.3,346.4 1113.8,345.8 1114.3,345.2 1114.8,344.6 1115.3,344.0 1115.8,343.4 1116.3,342.8 1116.8,342.2 1117.3,341.6 1117.8,341.0 1118.3,340.4 1118.8,339.8 1119.3,339.2 1119.8,338.6 1120.3,338.0 1120.8,337.4 1121.3,336.8 1121.8,336.2 1122.3,335.6 1122.8,335.0 1123.3,334.4 1123.8,333.8 1124.3,333.2 1124.8,332.6 1125.3,332.0 1125.8,331.5 1126.3,330.9 1126.8,330.3 1127.3,329.7 1127.8,329.1 1128.3,328.5 1128.8,327.9 1129.3,327.3 1129.8,326.7 1130.3,326.1 1130.8,325.4 1131.3,324.8 1131.8,324.2 1132.3,323.5 1132.8,322.9 1133.3,322.3 1133.8,321.6 1134.3,321.0 1134.8,320.3 1135.3,319.6 1135.8,319.0 1136.3,318.3 1136.8,317.6 1137.3,316.9 1137.8,316.2 1138.3,315.5 1138.8,314.7 1139.3,313.9 1139.8,313.1 1140.3,312.3 1140.8,311.4 1141.3,310.5 1141.8,309.6 1142.3,308.7 1142.8,307.8 1143.3,306.9 1143.8,306.1 1144.3,305.3 1144.8,304.6 1145.3,303.9 1145.8,303.2 1146.3,302.6 1146.8,301.9 1147.3,301.3 1147.8,300.7 1148.3,300.1 1148.8,299.4 1149.3,298.7 1149.8,298.0 1150.3,297.3 1150.8,296.5 1151.3,295.6 1151.8,294.7 1152.3,293.8 1152.8,292.8 1153.3,291.8 1153.8,290.7 1154.3,289.6 1154.8,288.5 1155.3,287.3 1155.8,286.1 1156.3,284.9 1156.8,283.6 1157.3,282.2 1157.8,280.6 1158.3,279.0 1158.8,277.3 1159.3,275.3 1159.8,273.1 1160.3,270.5 1160.8,267.4 1161.3,263.4 1161.8,257.5" fill="none" stroke="#00ff00" stroke-width="1" shape-rendering="crispEdges" stroke-linejoin="round"/><polyline points="70.0,241.6 70.5,241.5 71.0,241.3 71.5,241.2 72.0,241.1 72.5,240.9 73.0,240.8 73.5,240.7 74.0,240.5 74.5,240.4 75.0,240.3 75.5,240.2 76.0,240.0 76.5,239.9 77.0,239.8 77.5,239.7 78.0,239.6 78.5,239.5 79.0,239.3 79.5,239.2 80.0,239.1 80.5,239.0 81.0,238.8 81.5,238.7 82.0,238.6 82.5,238.5 83.0,238.5 83.5,238.4 84.0,238.4 84.5,238.4 85.0,238.4 85.5,238.4 86.0,238.3 86.5,238.3 87.0,238.3 87.5,238.3 88.0,238.3 88.5,238.3 89.0,238.3 89.5,238.3 90.0,238.3 90.5,238.3 91.0,238.3 91.5,238.3 92.0,238.3 92.5,238.3 93.0,238.3 93.5,238.3 94.0,238.3 94.5,238.2 95.0,238.2 95.5,238.2 96.0,238.2 96.5,238.1 97.0,238.0 97.5,237.9 98.0,237.7 98.5,237.4 99.0,237.1 99.5,236.8 100.0,236.5 100.5,236.2 101.0,235.9 101.5,235.6 102.0,235.3 102.5,235.1 103.0,234.9 103.5,234.7 104.0,234.6 104.5,234.5 105.0,234.3 105.5,234.2 106.0,234.1 106.5,234.0 107.0,233.9 107.5,233.8 108.0,233.7 108.5,233.6 109.0,233.5 109.5,233.4 110.0,233.3 110.5,233.2 111.0,233.1 111.5,233.0 112.0,232.9 112.5,232.8 113.0,232.8 113.5,232.7 114.0,232.6 114.5,232.5 115.0,232.5 115.5,232.4 116.0,232.4 116.5,232.3 117.0,232.3 117.5,232.3 118.0,232.2 118.5,232.2 119.0,232.1 119.5,232.1 120.0,232.0 120.5,232.0 121.0,231.9 121.5,231.8 122.0,231.7 122.5,231.6 123.0,231.5 123.5,231.4 124.0,231.1 124.5,230.7 125.0,230.2 125.5,229.7 126.0,229.3 126.5,229.2 127.0,229.1 127.5,229.0 128.0,228.9 128.5,228.8 129.0,228.8 129.5,228.8 130.0,228.7 130.5,228.7 131.0,228.6 131.5,228.6 132.0,228.6 132.5,228.5 133.0,228.5 133.5,228.4 134.0,228.4 134.5,228.3 135.0,228.2 135.5,228.2 136.0,228.1 136.5,228.0 137.0,227.8 137.5,227.7 138.0,227.6 138.5,227.5 139.0,227.4 139.5,227.2 140.0,227.1 140.5,226.9 141.0,226.8 141.5,226.7 142.0,226.5 142.5,226.4 143.0,226.3 143.5,226.1 144.0,226.0 144.5,225.9 145.0,225.8 145.5,225.6 146.0,225.5 146.5,225.4 147.0,225.3 147.5,225.2 148.0,225.0 148.5,224.9 149.0,224.8 149.5,224.6 150.0,224.5 150.5,224.3 151.0,224.2 151.5,224.0 152.0,223.8 152.5,223.7 153.0,223.5 153.5,223.3 154.0,223.1 154.5,222.8 155.0,222.5 155.5,222.2 156.0,221.8 156.5,221.4 157.0,221.0 157.5,220.6 158.0,220.3 158.5,219.9 159.0,219.7 159.5,219.5 160.0,219.3 160.5,219.1 161.0,219.0 161.5,218.8 162.0,218.7 162.5,218.6 163.0,218.4 163.5,218.3 164.0,218.2 164.5,218.1 165.0,218.0 165.5,217.9 166.0,217.8 166.5,217.7 167.0,217.6 167.5,217.5 168.0,217.4 168.5,217.3 169.0,217.1 169.5,217.0 170.0,216.9 170.5,216.7 171.0,216.5 171.5,216.3 172.0,216.1 172.5,215.9 173.0,215.7 173.5,215.4 174.0,215.2 174.5,214.9 175.0,214.6 175.5,214.4 176.0,214.1 176.5,213.8 177.0,213.5 177.5,213.3 178.0,213.0 178.5,212.7 179.0,212.5 179.5,212.2 180.0,212.0 180.5,211.7 181.0,211.5 181.5,211.3 182.0,211.0 182.5,210.8 183.0,210.5 183.5,210.2 184.0,209.9 184.5,209.7 185.0,209.4 185.5,209.1 186.0,208.9 186.5,208.6 187.0,208.4 187.5,208.2 188.0,208.0 188.5,207.9 189.0,207.7 189.5,207.6 190.0,207.5 190.5,207.5 191.0,207.5 191.5,207.5 192.0,207.5 192.5,207.5 193.0,207.5 193.5,207.5 194.0,207.5 194.5,207.5 195.0,207.5 195.5,207.5 196.0,207.5 196.5,207.5 197.0,207.5 197.5,207.5 198.0,207.5 198.5,207.5 199.0,207.5 199.5,207.5 200.0,207.5 200.5,207.5 201.0,207.5 201.5,207.5 202.0,207.5 202.5,207.6 203.0,207.7 203.5,207.9 204.0,208.2 204.5,208.5 205.0,208.8 205.5,209.2 206.0,209.6 206.5,210.0 207.0,210.5 207.5,211.2 208.0,212.0 208.5,212.9 209.0,213.9 209.5,214.9 210.0,216.0 210.5,217.1 211.0,218.4 211.5,219.7 212.0,221.1 212.5,222.6 213.0,224.3 213.5,226.0 214.0,227.8 214.5,229.7 215.0,231.7 215.5,233.9 216.0,236.3 216.5,239.0 217.0,241.8 217.5,244.8 218.0,248.0 218.5,251.5 219.0,256.1 219.5,261.2 220.0,265.8 220.5,269.2 221.0,272.3 221.5,275.1 222.0,277.8 222.5,280.3 223.0,282.6 223.5,284.8 224.0,286.9 224.5,288.8 225.0,290.7 225.5,292.4 226.0,294.1 226.5,295.7 227.0,297.2 227.5,298.6 228.0,300.0 228.5,301.4 229.0,302.6 229.5,303.9 230.0,305.0 230.5,306.2 231.0,307.2 231.5,308.3 232.0,309.3 232.5,310.3 233.0,311.4 233.5,312.5 234.0,313.5 234.5,314.5 235.0,315.3 235.5,316.0 236.0,316.4 236.5,316.6 237.0,316.7 237.5,316.8 238.0,316.8 238.5,316.9 239.0,316.9 239.5,317.0 240.0,317.0 240.5,317.0 241.0,317.1 241.5,317.1 242.0,317.1 242.5,317.1 243.0,317.1 243.5,317.1 244.0,317.1 244.5,317.1 245.0,317.1 245.5,317.1 246.0,317.1 246.5,317.0 247.0,317.0 247.5,317.0 248.0,317.0 248.5,317.0 249.0,316.9 249.5,316.9 250.0,316.9 250.5,316.9 251.0,316.8 251.5,316.7 252.0,316.5 252.5,316.4 253.0,316.2 253.5,316.0 254.0,315.8 254.5,315.6 255.0,315.3 255.5,315.1 256.0,314.9 256.5,314.6 257.0,314.4 257.5,314.2 258.0,313.9 258.5,313.7 259.0,313.4 259.5,313.1 260.0,312.8 260.5,312.5 261.0,312.2 261.5,311.8 262.0,311.5 262.5,311.2 263.0,310.8 263.5,310.5 264.0,310.1 264.5,309.8 265.0,309.4 265.5,309.1 266.0,308.7 266.5,308.4 267.0,308.1 267.5,307.7 268.0,307.4 268.5,307.1 269.0,306.9 269.5,306.6 270.0,306.3 270.5,306.0 271.0,305.7 271.5,305.5 272.0,305.2 272.5,304.9 273.0,304.6 273.5,304.4 274.0,304.1 274.5,303.8 275.0,303.6 275.5,303.3 276.0,303.1 276.5,302.8 277.0,302.5 277.5,302.3 278.0,302.0 278.5,301.7 279.0,301.4 279.5,301.2 280.0,300.9 280.5,300.7 281.0,300.4 281.5,300.1 282.0,299.9 282.5,299.6 283.0,299.3 283.5,299.1 284.0,298.8 284.5,298.5 285.0,298.3 285.5,298.0 286.0,297.7 286.5,297.5 287.0,297.2 287.5,296.9 288.0,296.7 288.5,296.4 289.0,296.1 289.5,295.9 290.0,295.6 290.5,295.3 291.0,294.9 291.5,294.6 292.0,294.3 292.5,293.9 293.0,293.6 293.5,293.2 294.0,292.9 294.5,292.5 295.0,292.2 295.5,291.9 296.0,291.6 296.5,291.4 297.0,291.1 297.5,290.9 298.0,290.8 298.5,290.7 299.0,290.6 299.5,290.5 300.0,290.5 300.5,290.4 301.0,290.4 301.5,290.4 302.0,290.3 302.5,290.3 303.0,290.3 303.5,290.2 304.0,290.0 304.5,289.8 305.0,289.5 305.5,289.2 306.0,288.8 306.5,288.4 307.0,288.0 307.5,287.6 308.0,287.3 308.5,287.0 309.0,286.7 309.5,286.4 310.0,286.2 310.5,285.9 311.0,285.7 311.5,285.5 312.0,285.2 312.5,285.0 313.0,284.8 313.5,284.5 314.0,284.3 314.5,284.1 315.0,283.9 315.5,283.7 316.0,283.4 316.5,283.2 317.0,283.0 317.5,282.8 318.0,282.6 318.5,282.4 319.0,282.3 319.5,282.1 320.0,281.9 320.5,281.7 321.0,281.6 321.5,281.4 322.0,281.2 322.5,281.1 323.0,280.9 323.5,280.8 324.0,280.7 324.5,280.5 325.0,280.4 325.5,280.3 326.0,280.2 326.5,280.1 327.0,280.0 327.5,280.0 328.0,279.9 328.5,279.8 329.0,279.7 329.5,279.6 330.0,279.5 330.5,279.4 331.0,279.2 331.5,278.9 332.0,278.5 332.5,277.9 333.0,277.3 333.5,276.8 334.0,276.3 334.5,276.0 335.0,275.8 335.5,275.7 336.0,275.6 336.5,275.5 337.0,275.4 337.5,275.3 338.0,275.2 338.5,275.1 339.0,275.1 339.5,275.0 340.0,274.9 340.5,274.9 341.0,274.8 341.5,274.8 342.0,274.7 342.5,274.7 343.0,274.6 343.5,274.6 344.0,274.5 344.5,274.4 345.0,274.4 345.5,274.3 346.0,274.2 346.5,274.0 347.0,273.9 347.5,273.8 348.0,273.7 348.5,273.5 349.0,273.4 349.5,273.3 350.0,273.1 350.5,272.9 351.0,272.8 351.5,272.6 352.0,272.5 352.5,272.3 353.0,272.1 353.5,271.9 354.0,271.7 354.5,271.6 355.0,271.4 355.5,271.2 356.0,271.0 356.5,270.8 357.0,270.7 357.5,270.5 358.0,270.3 358.5,270.1 359.0,269.9 359.5,269.7 360.0,269.6 360.5,269.4 361.0,269.2 361.5,269.0 362.0,268.8 362.5,268.6 363.0,268.4 363.5,268.2 364.0,267.9 364.5,267.7 365.0,267.5 365.5,267.2 366.0,267.0 366.5,266.8 367.0,266.5 367.5,266.3 368.0,266.1 368.5,265.8 369.0,265.6 369.5,265.4 370.0,265.2 370.5,265.0 371.0,264.9 371.5,264.7 372.0,264.6 372.5,264.4 373.0,264.3 373.5,264.2 374.0,264.2 374.5,264.1 375.0,264.1 375.5,264.1 376.0,264.2 376.5,264.4 377.0,264.6 377.5,264.8 378.0,265.1 378.5,265.4 379.0,265.6 379.5,265.8 380.0,265.9 380.5,265.9 381.0,265.8 381.5,265.7 382.0,265.6 382.5,265.4 383.0,265.1 383.5,264.9 384.0,264.6 384.5,264.3 385.0,264.0 385.5,263.8 386.0,263.6 386.5,263.4 387.0,263.3 387.5,263.1 388.0,263.0 388.5,262.9 389.0,262.7 389.5,262.6 390.0,262.5 390.5,262.4 391.0,262.2 391.5,262.1 392.0,262.0 392.5,261.9 393.0,261.8 393.5,261.7 394.0,261.6 394.5,261.4 395.0,261.3 395.5,261.2 396.0,261.1 396.5,261.0 397.0,260.9 397.5,260.8 398.0,260.6 398.5,260.5 399.0,260.4 399.5,260.2 400.0,260.1 400.5,260.0 401.0,259.9 401.5,259.7 402.0,259.6 402.5,259.5 403.0,259.4 403.5,259.2 404.0,259.1 404.5,259.0 405.0,258.9 405.5,258.8 406.0,258.7 406.5,258.6 407.0,258.5 407.5,258.4 408.0,258.3 408.5,258.2 409.0,258.1 409.5,258.0 410.0,257.9 410.5,257.8 411.0,257.7 411.5,257.6 412.0,257.5 412.5,257.5 413.0,257.4 413.5,257.3 414.0,257.2 414.5,257.1 415.0,257.0 415.5,256.9 416.0,256.9 416.5,256.8 417.0,256.7 417.5,256.7 418.0,256.6 418.5,256.6 419.0,256.5 419.5,256.5 420.0,256.5 420.5,256.4 421.0,256.4 421.5,256.4 422.0,256.4 422.5,256.4 423.0,256.4 423.5,256.4 424.0,256.3 424.5,256.3 425.0,256.3 425.5,256.3 426.0,256.3 426.5,256.3 427.0,256.3 427.5,256.3 428.0,256.3 428.5,256.3 429.0,256.3 429.5,256.3 430.0,256.3 430.5,256.3 431.0,256.3 431.5,256.3 432.0,256.3 432.5,256.2 433.0,256.2 433.5,256.2 434.0,256.2 434.5,256.2 435.0,256.1 435.5,255.9 436.0,255.8 436.5,255.6 437.0,255.3 437.5,255.1 438.0,254.9 438.5,254.8 439.0,254.7 439.5,254.6 440.0,254.5 440.5,254.4 441.0,254.3 441.5,254.2 442.0,254.1 442.5,254.0 443.0,254.0 443.5,253.9 444.0,253.8 444.5,253.7 445.0,253.7 445.5,253.6 446.0,253.5 446.5,253.5 447.0,253.4 447.5,253.3 448.0,253.3 448.5,253.2 449.0,253.1 449.5,253.1 450.0,253.0 450.5,252.9 451.0,252.8 451.5,252.7 452.0,252.7 452.5,252.6 453.0,252.5 453.5,252.4 454.0,252.3 454.5,252.2 455.0,252.1 455.5,252.0 456.0,251.9 456.5,251.8 457.0,251.7 457.5,251.7 458.0,251.6 458.5,251.6 459.0,251.5 459.5,251.5 460.0,251.5 460.5,251.5 461.0,251.5 461.5,251.5 462.0,251.5 462.5,251.5 463.0,251.5 463.5,251.5 464.0,251.5 464.5,251.5 465.0,251.5 465.5,251.5 466.0,251.5 466.5,251.6 467.0,251.6 467.5,251.6 468.0,251.6 468.5,251.6 469.0,251.6 469.5,251.6 470.0,251.6 470.5,251.6 471.0,251.6 471.5,251.7 472.0,251.7 472.5,251.7 473.0,251.7 473.5,251.7 474.0,251.7 474.5,251.7 475.0,251.8 475.5,251.8 476.0,251.8 476.5,251.8 477.0,251.8 477.5,251.9 478.0,251.9 478.5,252.0 479.0,252.0 479.5,252.0 480.0,252.1 480.5,252.1 481.0,252.2 481.5,252.2 482.0,252.3 482.5,252.3 483.0,252.4 483.5,252.4 484.0,252.4 484.5,252.5 485.0,252.5 485.5,252.5 486.0,252.6 486.5,252.6 487.0,252.6 487.5,252.6 488.0,252.7 488.5,252.7 489.0,252.7 489.5,252.8 490.0,252.8 490.5,252.8 491.0,252.8 491.5,252.9 492.0,252.9 492.5,252.9 493.0,252.9 493.5,253.0 494.0,253.0 494.5,253.0 495.0,253.0 495.5,253.0 496.0,253.0 496.5,253.0 497.0,253.0 497.5,252.9 498.0,252.8 498.5,252.7 499.0,252.6 499.5,252.4 500.0,252.3 500.5,252.1 501.0,251.9 501.5,251.7 502.0,251.5 502.5,251.3 503.0,251.1 503.5,251.0 504.0,250.8 504.5,250.6 505.0,250.5 505.5,250.4 506.0,250.2 506.5,250.1 507.0,250.0 507.5,249.9 508.0,249.7 508.5,249.6 509.0,249.5 509.5,249.4 510.0,249.2 510.5,249.1 511.0,249.0 511.5,248.9 512.0,248.7 512.5,248.6 513.0,248.5 513.5,248.4 514.0,248.3 514.5,248.2 515.0,248.1 515.5,247.9 516.0,247.8 516.5,247.7 517.0,247.6 517.5,247.5 518.0,247.4 518.5,247.3 519.0,247.2 519.5,247.1 520.0,247.0 520.5,246.9 521.0,246.8 521.5,246.7 522.0,246.6 522.5,246.5 523.0,246.4 523.5,246.4 524.0,246.3 524.5,246.2 525.0,246.1 525.5,246.0 526.0,245.9 526.5,245.8 527.0,245.8 527.5,245.7 528.0,245.6 528.5,245.5 529.0,245.4 529.5,245.4 530.0,245.3 530.5,245.2 531.0,245.1 531.5,245.1 532.0,245.0 532.5,244.9 533.0,244.8 533.5,244.8 534.0,244.7 534.5,244.6 535.0,244.5 535.5,244.5 536.0,244.4 536.5,244.3 537.0,244.2 537.5,244.2 538.0,244.1 538.5,244.0 539.0,243.9 539.5,243.8 540.0,243.8 540.5,243.7 541.0,243.6 541.5,243.5 542.0,243.4 542.5,243.3 543.0,243.3 543.5,243.2 544.0,243.1 544.5,243.0 545.0,242.9 545.5,242.8 546.0,242.7 546.5,242.6 547.0,242.5 547.5,242.4 548.0,242.3 548.5,242.2 549.0,242.1 549.5,242.0 550.0,241.9 550.5,241.8 551.0,241.7 551.5,241.6 552.0,241.5 552.5,241.4 553.0,241.3 553.5,241.2 554.0,241.1 554.5,241.0 555.0,240.9 555.5,240.8 556.0,240.7 556.5,240.6 557.0,240.5 557.5,240.4 558.0,240.3 558.5,240.2 559.0,240.2 559.5,240.1 560.0,240.0 560.5,239.9 561.0,239.8 561.5,239.8 562.0,239.7 562.5,239.6 563.0,239.6 563.5,239.5 564.0,239.4 564.5,239.4 565.0,239.3 565.5,239.2 566.0,239.2 566.5,239.1 567.0,239.0 567.5,239.0 568.0,238.9 568.5,238.9 569.0,238.8 569.5,238.8 570.0,238.7 570.5,238.6 571.0,238.6 571.5,238.5 572.0,238.5 572.5,238.4 573.0,238.3 573.5,238.3 574.0,238.2 574.5,238.2 575.0,238.1 575.5,238.0 576.0,238.0 576.5,237.9 577.0,237.8 577.5,237.8 578.0,237.7 578.5,237.6 579.0,237.6 579.5,237.5 580.0,237.4 580.5,237.4 581.0,237.3 581.5,237.2 582.0,237.1 582.5,237.0 583.0,237.0 583.5,236.9 584.0,236.8 584.5,236.7 585.0,236.6 585.5,236.5 586.0,236.5 586.5,236.4 587.0,236.3 587.5,236.2 588.0,236.1 588.5,236.0 589.0,236.0 589.5,235.9 590.0,235.8 590.5,235.7 591.0,235.6 591.5,235.5 592.0,235.5 592.5,235.4 593.0,235.3 593.5,235.2 594.0,235.1 594.5,235.1 595.0,235.0 595.5,234.9 596.0,234.9 596.5,234.8 597.0,234.7 597.5,234.6 598.0,234.6 598.5,234.5 599.0,234.4 599.5,234.4 600.0,234.3 600.5,234.2 601.0,234.2 601.5,234.1 602.0,234.0 602.5,234.0 603.0,233.9 603.5,233.8 604.0,233.8 604.5,233.7 605.0,233.7 605.5,233.6 606.0,233.5 606.5,233.5 607.0,233.4 607.5,233.4 608.0,233.3 608.5,233.2 609.0,233.2 609.5,233.1 610.0,233.1 610.5,233.0 611.0,233.0 611.5,233.0 612.0,232.9 612.5,232.9 613.0,232.8 613.5,232.8 614.0,232.8 614.5,232.7 615.0,232.7 615.5,232.6 616.0,232.6 616.5,232.6 617.0,232.5 617.5,232.5 618.0,232.5 618.5,232.4 619.0,232.4 619.5,232.4 620.0,232.3 620.5,232.3 621.0,232.3 621.5,232.2 622.0,232.2 622.5,232.1 623.0,232.1 623.5,232.0 624.0,232.0 624.5,231.9 625.0,231.9 625.5,231.8 626.0,231.8 626.5,231.7 627.0,231.7 627.5,231.6 628.0,231.5 628.5,231.5 629.0,231.4 629.5,231.3 630.0,231.2 630.5,231.2 631.0,231.0 631.5,230.9 632.0,230.7 632.5,230.5 633.0,230.3 633.5,230.1 634.0,229.9 634.5,229.7 635.0,229.5 635.5,229.3 636.0,229.1 636.5,229.0 637.0,228.8 637.5,228.8 638.0,228.7 638.5,228.6 639.0,228.6 639.5,228.5 640.0,228.5 640.5,228.4 641.0,228.4 641.5,228.3 642.0,228.3 642.5,228.2 643.0,228.2 643.5,228.1 644.0,228.1 644.5,228.1 645.0,228.0 645.5,228.0 646.0,228.0 646.5,227.9 647.0,227.9 647.5,227.9 648.0,227.9 648.5,227.8 649.0,227.8 649.5,227.8 650.0,227.7 650.5,227.7 651.0,227.7 651.5,227.6 652.0,227.6 652.5,227.6 653.0,227.5 653.5,227.5 654.0,227.5 654.5,227.4 655.0,227.4 655.5,227.3 656.0,227.3 656.5,227.3 657.0,227.2 657.5,227.2 658.0,227.2 658.5,227.1 659.0,227.1 659.5,227.1 660.0,227.0 660.5,227.0 661.0,227.0 661.5,226.9 662.0,226.9 662.5,226.8 663.0,226.8 663.5,226.8 664.0,226.7 664.5,226.7 665.0,226.7 665.5,226.6 666.0,226.6 666.5,226.5 667.0,226.5 667.5,226.5 668.0,226.4 668.5,226.4 669.0,226.3 669.5,226.3 670.0,226.2 670.5,226.2 671.0,226.1 671.5,226.1 672.0,226.1 672.5,226.0 673.0,225.9 673.5,225.9 674.0,225.8 674.5,225.8 675.0,225.7 675.5,225.6 676.0,225.5 676.5,225.5 677.0,225.4 677.5,225.3 678.0,225.2 678.5,225.1 679.0,225.0 679.5,225.0 680.0,224.9 680.5,224.8 681.0,224.7 681.5,224.6 682.0,224.5 682.5,224.5 683.0,224.4 683.5,224.3 684.0,224.2 684.5,224.2 685.0,224.1 685.5,224.0 686.0,224.0 686.5,223.9 687.0,223.9 687.5,223.8 688.0,223.8 688.5,223.8 689.0,223.7 689.5,223.7 690.0,223.7 690.5,223.6 691.0,223.6 691.5,223.6 692.0,223.6 692.5,223.6 693.0,223.5 693.5,223.5 694.0,223.5 694.5,223.5 695.0,223.5 695.5,223.5 696.0,223.4 696.5,223.4 697.0,223.4 697.5,223.4 698.0,223.4 698.5,223.4 699.0,223.4 699.5,223.3 700.0,223.3 700.5,223.3 701.0,223.3 701.5,223.3 702.0,223.3 702.5,223.3 703.0,223.2 703.5,223.2 704.0,223.2 704.5,223.2 705.0,223.2 705.5,223.2 706.0,223.2 706.5,223.1 707.0,223.1 707.5,223.1 708.0,223.1 708.5,223.1 709.0,223.0 709.5,223.0 710.0,223.0 710.5,223.0 711.0,223.0 711.5,222.9 712.0,222.9 712.5,222.9 713.0,222.8 713.5,222.8 714.0,222.8 714.5,222.8 715.0,222.7 715.5,222.7 716.0,222.7 716.5,222.6 717.0,222.6 717.5,222.6 718.0,222.5 718.5,222.5 719.0,222.5 719.5,222.4 720.0,222.4 720.5,222.3 721.0,222.3 721.5,222.3 722.0,222.2 722.5,222.2 723.0,222.1 723.5,222.1 724.0,222.1 724.5,222.0 725.0,222.0 725.5,221.9 726.0,221.9 726.5,221.8 727.0,221.8 727.5,221.8 728.0,221.7 728.5,221.6 729.0,221.6 729.5,221.5 730.0,221.5 730.5,221.4 731.0,221.3 731.5,221.2 732.0,221.2 732.5,221.1 733.0,221.0 733.5,220.9 734.0,220.8 734.5,220.7 735.0,220.7 735.5,220.6 736.0,220.5 736.5,220.4 737.0,220.3 737.5,220.2 738.0,220.2 738.5,220.1 739.0,220.0 739.5,220.0 740.0,219.9 740.5,219.8 741.0,219.8 741.5,219.7 742.0,219.7 742.5,219.6 743.0,219.6 743.5,219.6 744.0,219.5 744.5,219.5 745.0,219.5 745.5,219.5 746.0,219.5 746.5,219.5 747.0,219.5 747.5,219.5 748.0,219.5 748.5,219.5 749.0,219.5 749.5,219.5 750.0,219.5 750.5,219.5 751.0,219.5 751.5,219.5 752.0,219.4 752.5,219.4 753.0,219.4 753.5,219.4 754.0,219.4 754.5,219.4 755.0,219.4 755.5,219.4 756.0,219.4 756.5,219.4 757.0,219.4 757.5,219.4 758.0,219.4 758.5,219.4 759.0,219.4 759.5,219.4 760.0,219.4 760.5,219.4 761.0,219.4 761.5,219.4 762.0,219.4 762.5,219.3 763.0,219.3 763.5,219.3 764.0,219.3 764.5,219.2 765.0,219.2 765.5,219.2 766.0,219.1 766.5,219.1 767.0,219.1 767.5,219.0 768.0,219.0 768.5,218.9 769.0,218.9 769.5,218.8 770.0,218.8 770.5,218.7 771.0,218.7 771.5,218.6 772.0,218.6 772.5,218.5 773.0,218.5 773.5,218.4 774.0,218.3 774.5,218.3 775.0,218.2 775.5,218.2 776.0,218.1 776.5,218.0 777.0,218.0 777.5,217.9 778.0,217.8 778.5,217.8 779.0,217.7 779.5,217.6 780.0,217.5 780.5,217.5 781.0,217.4 781.5,217.3 782.0,217.3 782.5,217.2 783.0,217.1 783.5,217.0 784.0,217.0 784.5,216.9 785.0,216.8 785.5,216.7 786.0,216.7 786.5,216.6 787.0,216.5 787.5,216.5 788.0,216.4 788.5,216.3 789.0,216.2 789.5,216.2 790.0,216.1 790.5,216.0 791.0,216.0 791.5,215.9 792.0,215.8 792.5,215.8 793.0,215.7 793.5,215.7 794.0,215.6 794.5,215.5 795.0,215.5 795.5,215.4 796.0,215.4 796.5,215.3 797.0,215.3 797.5,215.2 798.0,215.2 798.5,215.1 799.0,215.1 799.5,215.0 800.0,215.0 800.5,214.9 801.0,214.9 801.5,214.8 802.0,214.8 802.5,214.7 803.0,214.7 803.5,214.7 804.0,214.6 804.5,214.6 805.0,214.5 805.5,214.5 806.0,214.4 806.5,214.4 807.0,214.3 807.5,214.3 808.0,214.2 808.5,214.2 809.0,214.2 809.5,214.1 810.0,214.1 810.5,214.0 811.0,214.0 811.5,213.9 812.0,213.9 812.5,213.8 813.0,213.8 813.5,213.8 814.0,213.7 814.5,213.7 815.0,213.6 815.5,213.6 816.0,213.5 816.5,213.5 817.0,213.5 817.5,213.4 818.0,213.4 818.5,213.3 819.0,213.3 819.5,213.2 820.0,213.2 820.5,213.2 821.0,213.1 821.5,213.1 822.0,213.0 822.5,213.0 823.0,213.0 823.5,212.9 824.0,212.9 824.5,212.8 825.0,212.8 825.5,212.8 826.0,212.7 826.5,212.7 827.0,212.6 827.5,212.6 828.0,212.6 828.5,212.5 829.0,212.5 829.5,212.4 830.0,212.4 830.5,212.4 831.0,212.3 831.5,212.3 832.0,212.2 832.5,212.2 833.0,212.2 833.5,212.1 834.0,212.1 834.5,212.0 835.0,212.0 835.5,212.0 836.0,211.9 836.5,211.9 837.0,211.9 837.5,211.8 838.0,211.8 838.5,211.7 839.0,211.7 839.5,211.7 840.0,211.6 840.5,211.6 841.0,211.6 841.5,211.5 842.0,211.5 842.5,211.5 843.0,211.4 843.5,211.4 844.0,211.4 844.5,211.3 845.0,211.3 845.5,211.3 846.0,211.2 846.5,211.2 847.0,211.1 847.5,211.1 848.0,211.1 848.5,211.0 849.0,211.0 849.5,211.0 850.0,210.9 850.5,210.9 851.0,210.9 851.5,210.9 852.0,210.8 852.5,210.8 853.0,210.8 853.5,210.7 854.0,210.7 854.5,210.7 855.0,210.6 855.5,210.6 856.0,210.6 856.5,210.5 857.0,210.5 857.5,210.5 858.0,210.5 858.5,210.4 859.0,210.4 859.5,210.4 860.0,210.3 860.5,210.3 861.0,210.3 861.5,210.3 862.0,210.2 862.5,210.2 863.0,210.2 863.5,210.1 864.0,210.1 864.5,210.1 865.0,210.1 865.5,210.0 866.0,210.0 866.5,210.0 867.0,210.0 867.5,209.9 868.0,209.9 868.5,209.9 869.0,209.9 869.5,209.8 870.0,209.8 870.5,209.8 871.0,209.8 871.5,209.7 872.0,209.7 872.5,209.7 873.0,209.7 873.5,209.7 874.0,209.6 874.5,209.6 875.0,209.6 875.5,209.6 876.0,209.5 876.5,209.5 877.0,209.5 877.5,209.5 878.0,209.5 878.5,209.4 879.0,209.4 879.5,209.4 880.0,209.4 880.5,209.3 881.0,209.3 881.5,209.3 882.0,209.3 882.5,209.3 883.0,209.2 883.5,209.2 884.0,209.2 884.5,209.2 885.0,209.2 885.5,209.1 886.0,209.1 886.5,209.1 887.0,209.1 887.5,209.1 888.0,209.0 888.5,209.0 889.0,209.0 889.5,209.0 890.0,209.0 890.5,208.9 891.0,208.9 891.5,208.9 892.0,208.9 892.5,208.9 893.0,208.8 893.5,208.8 894.0,208.8 894.5,208.8 895.0,208.8 895.5,208.7 896.0,208.7 896.5,208.7 897.0,208.7 897.5,208.7 898.0,208.6 898.5,208.6 899.0,208.6 899.5,208.6 900.0,208.6 900.5,208.5 901.0,208.5 901.5,208.5 902.0,208.5 902.5,208.5 903.0,208.4 903.5,208.4 904.0,208.4 904.5,208.4 905.0,208.4 905.5,208.3 906.0,208.3 906.5,208.3 907.0,208.3 907.5,208.2 908.0,208.2 908.5,208.2 909.0,208.2 909.5,208.2 910.0,208.1 910.5,208.1 911.0,208.1 911.5,208.1 912.0,208.0 912.5,208.0 913.0,208.0 913.5,208.0 914.0,207.9 914.5,207.9 915.0,207.9 915.5,207.9 916.0,207.8 916.5,207.8 917.0,207.8 917.5,207.8 918.0,207.7 918.5,207.7 919.0,207.7 919.5,207.7 920.0,207.6 920.5,207.6 921.0,207.6 921.5,207.6 922.0,207.5 922.5,207.5 923.0,207.5 923.5,207.5 924.0,207.4 924.5,207.4 925.0,207.4 925.5,207.4 926.0,207.3 926.5,207.3 927.0,207.3 927.5,207.3 928.0,207.2 928.5,207.2 929.0,207.2 929.5,207.2 930.0,207.2 930.5,207.1 931.0,207.1 931.5,207.1 932.0,207.1 932.5,207.0 933.0,207.0 933.5,207.0 934.0,207.0 934.5,206.9 935.0,206.9 935.5,206.9 936.0,206.9 936.5,206.9 937.0,206.8 937.5,206.8 938.0,206.8 938.5,206.8 939.0,206.8 939.5,206.7 940.0,206.7 940.5,206.7 941.0,206.7 941.5,206.7 942.0,206.7 942.5,206.6 943.0,206.6 943.5,206.6 944.0,206.6 944.5,206.6 945.0,206.6 945.5,206.5 946.0,206.5 946.5,206.5 947.0,206.5 947.5,206.5 948.0,206.5 948.5,206.5 949.0,206.5 949.5,206.4 950.0,206.4 950.5,206.4 951.0,206.4 951.5,206.4 952.0,206.4 952.5,206.4 953.0,206.4 953.5,206.4 954.0,206.3 954.5,206.3 955.0,206.3 955.5,206.3 956.0,206.3 956.5,206.3 957.0,206.3 957.5,206.3 958.0,206.3 958.5,206.3 959.0,206.2 959.5,206.2 960.0,206.2 960.5,206.2 961.0,206.2 961.5,206.2 962.0,206.2 962.5,206.2 963.0,206.2 963.5,206.2 964.0,206.1 964.5,206.1 965.0,206.1 965.5,206.1 966.0,206.1 966.5,206.1 967.0,206.1 967.5,206.1 968.0,206.0 968.5,206.0 969.0,206.0 969.5,206.0 970.0,206.0 970.5,206.0 971.0,205.9 971.5,205.9 972.0,205.9 972.5,205.9 973.0,205.9 973.5,205.9 974.0,205.8 974.5,205.8 975.0,205.8 975.5,205.8 976.0,205.7 976.5,205.7 977.0,205.7 977.5,205.6 978.0,205.6 978.5,205.6 979.0,205.5 979.5,205.5 980.0,205.5 980.5,205.4 981.0,205.4 981.5,205.3 982.0,205.3 982.5,205.3 983.0,205.2 983.5,205.2 984.0,205.2 984.5,205.1 985.0,205.1 985.5,205.0 986.0,205.0 986.5,205.0 987.0,204.9 987.5,204.9 988.0,204.8 988.5,204.8 989.0,204.8 989.5,204.7 990.0,204.7 990.5,204.6 991.0,204.6 991.5,204.6 992.0,204.5 992.5,204.5 993.0,204.5 993.5,204.4 994.0,204.4 994.5,204.4 995.0,204.4 995.5,204.3 996.0,204.3 996.5,204.3 997.0,204.3 997.5,204.3 998.0,204.2 998.5,204.2 999.0,204.2 999.5,204.2 1000.0,204.2 1000.5,204.1 1001.0,204.1 1001.5,204.1 1002.0,204.1 1002.5,204.1 1003.0,204.0 1003.5,204.0 1004.0,204.0 1004.5,204.0 1005.0,204.0 1005.5,203.9 1006.0,203.9 1006.5,203.9 1007.0,203.9 1007.5,203.9 1008.0,203.9 1008.5,203.8 1009.0,203.8 1009.5,203.8 1010.0,203.8 1010.5,203.8 1011.0,203.8 1011.5,203.7 1012.0,203.7 1012.5,203.7 1013.0,203.7 1013.5,203.7 1014.0,203.7 1014.5,203.7 1015.0,203.6 1015.5,203.6 1016.0,203.6 1016.5,203.6 1017.0,203.6 1017.5,203.6 1018.0,203.5 1018.5,203.5 1019.0,203.5 1019.5,203.5 1020.0,203.5 1020.5,203.5 1021.0,203.5 1021.5,203.5 1022.0,203.4 1022.5,203.4 1023.0,203.4 1023.5,203.4 1024.0,203.4 1024.5,203.4 1025.0,203.4 1025.5,203.3 1026.0,203.3 1026.5,203.3 1027.0,203.3 1027.5,203.3 1028.0,203.3 1028.5,203.3 1029.0,203.3 1029.5,203.2 1030.0,203.2 1030.5,203.2 1031.0,203.2 1031.5,203.2 1032.0,203.2 1032.5,203.2 1033.0,203.2 1033.5,203.1 1034.0,203.1 1034.5,203.1 1035.0,203.1 1035.5,203.1 1036.0,203.1 1036.5,203.1 1037.0,203.1 1037.5,203.1 1038.0,203.0 1038.5,203.0 1039.0,203.0 1039.5,203.0 1040.0,203.0 1040.5,203.0 1041.0,203.0 1041.5,203.0 1042.0,202.9 1042.5,202.9 1043.0,202.9 1043.5,202.9 1044.0,202.9 1044.5,202.9 1045.0,202.9 1045.5,202.9 1046.0,202.9 1046.5,202.8 1047.0,202.8 1047.5,202.8 1048.0,202.8 1048.5,202.8 1049.0,202.8 1049.5,202.8 1050.0,202.8 1050.5,202.7 1051.0,202.7 1051.5,202.7 1052.0,202.7 1052.5,202.7 1053.0,202.7 1053.5,202.7 1054.0,202.7 1054.5,202.6 1055.0,202.6 1055.5,202.6 1056.0,202.6 1056.5,202.6 1057.0,202.6 1057.5,202.6 1058.0,202.6 1058.5,202.5 1059.0,202.5 1059.5,202.5 1060.0,202.5 1060.5,202.5 1061.0,202.5 1061.5,202.5 1062.0,202.5 1062.5,202.4 1063.0,202.4 1063.5,202.4 1064.0,202.4 1064.5,202.4 1065.0,202.4 1065.5,202.4 1066.0,202.4 1066.5,202.4 1067.0,202.3 1067.5,202.3 1068.0,202.3 1068.5,202.3 1069.0,202.3 1069.5,202.3 1070.0,202.3 1070.5,202.3 1071.0,202.2 1071.5,202.2 1072.0,202.2 1072.5,202.2 1073.0,202.2 1073.5,202.2 1074.0,202.2 1074.5,202.2 1075.0,202.2 1075.5,202.1 1076.0,202.1 1076.5,202.1 1077.0,202.1 1077.5,202.1 1078.0,202.1 1078.5,202.1 1079.0,202.1 1079.5,202.1 1080.0,202.0 1080.5,202.0 1081.0,202.0 1081.5,202.0 1082.0,202.0 1082.5,202.0 1083.0,202.0 1083.5,202.0 1084.0,202.0 1084.5,202.0 1085.0,201.9 1085.5,201.9 1086.0,201.9 1086.5,201.9 1087.0,201.9 1087.5,201.9 1088.0,201.9 1088.5,201.9 1089.0,201.9 1089.5,201.9 1090.0,201.8 1090.5,201.8 1091.0,201.8 1091.5,201.8 1092.0,201.8 1092.5,201.8 1093.0,201.8 1093.5,201.8 1094.0,201.8 1094.5,201.8 1095.0,201.7 1095.5,201.7 1096.0,201.7 1096.5,201.7 1097.0,201.7 1097.5,201.7 1098.0,201.7 1098.5,201.7 1099.0,201.7 1099.5,201.7 1100.0,201.7 1100.5,201.7 1101.0,201.6 1101.5,201.6 1102.0,201.6 1102.5,201.6 1103.0,201.6 1103.5,201.6 1104.0,201.6 1104.5,201.6 1105.0,201.6 1105.5,201.6 1106.0,201.6 1106.5,201.6 1107.0,201.6 1107.5,201.6 1108.0,201.6 1108.5,201.6 1109.0,201.6 1109.5,201.5 1110.0,201.5 1110.5,201.5 1111.0,201.5 1111.5,201.5 1112.0,201.5 1112.5,201.5 1113.0,201.5 1113.5,201.5 1114.0,201.5 1114.5,201.5 1115.0,201.5 1115.5,201.5 1116.0,201.5 1116.5,201.5 1117.0,201.5 1117.5,201.5 1118.0,201.5 1118.5,201.5 1119.0,201.5 1119.5,201.5 1120.0,201.5 1120.5,201.4 1121.0,201.4 1121.5,201.4 1122.0,201.4 1122.5,201.4 1123.0,201.4 1123.5,201.4 1124.0,201.4 1124.5,201.4 1125.0,201.4 1125.5,201.4 1126.0,201.4 1126.5,201.4 1127.0,201.4 1127.5,201.4 1128.0,201.4 1128.5,201.4 1129.0,201.4 1129.5,201.4 1130.0,201.3 1130.5,201.3 1131.0,201.3 1131.5,201.3 1132.0,201.3 1132.5,201.3 1133.0,201.3 1133.5,201.3 1134.0,201.3 1134.5,201.3 1135.0,201.3 1135.5,201.3 1136.0,201.3 1136.5,201.2 1137.0,201.2 1137.5,201.2 1138.0,201.2 1138.5,201.2 1139.0,201.2 1139.5,201.2 1140.0,201.2 1140.5,201.2 1141.0,201.2 1141.5,201.1 1142.0,201.1 1142.5,201.1 1143.0,201.1 1143.5,201.1 1144.0,201.1 1144.5,201.1 1145.0,201.1 1145.5,201.0 1146.0,201.0 1146.5,201.0 1147.0,201.0 1147.5,201.0 1148.0,201.0 1148.5,200.9 1149.0,200.9 1149.5,200.9 1150.0,200.8 1150.5,200.8 1151.0,200.8 1151.5,200.7 1152.0,200.7 1152.5,200.6 1153.0,200.5 1153.5,200.5 1154.0,200.4 1154.5,200.3 1155.0,200.3 1155.5,200.2 1156.0,200.1 1156.5,200.0 1157.0,200.0 1157.5,199.9 1158.0,199.7 1158.5,199.6 1159.0,199.5 1159.5,199.3 1160.0,199.1 1160.5,198.9 1161.0,198.7 1161.5,198.6 1161.9,198.4" fill="none" stroke="#a0a0a0" stroke-width="1" shape-rendering="crispEdges" stroke-linejoin="round"/></svg>
<span class="t " style="left:70.83px;top:135px;font-size:16px;line-height:16px;color:#000;letter-spacing:-0.486px;word-spacing:0.486px;">|Z| (ohm)</span>
<span class="t " style="left:575.40px;top:135px;font-size:16px;line-height:16px;color:#000;letter-spacing:-0.012px;">Impedance</span>
<span class="t " style="left:1094.25px;top:135px;font-size:16px;line-height:16px;color:#000;letter-spacing:0.039px;word-spacing:-0.039px;">Phase (°)</span>
<span class="t " style="left:37.20px;top:147px;font-size:15px;line-height:15px;color:#000;letter-spacing:-0.298px;">62.0</span>
<span class="t " style="left:37.20px;top:200px;font-size:15px;line-height:15px;color:#000;letter-spacing:-0.298px;">55.8</span>
<span class="t " style="left:37.20px;top:254px;font-size:15px;line-height:15px;color:#000;letter-spacing:-0.298px;">49.6</span>
<span class="t " style="left:37.20px;top:307px;font-size:15px;line-height:15px;color:#000;letter-spacing:-0.298px;">43.4</span>
<span class="t " style="left:37.20px;top:361px;font-size:15px;line-height:15px;color:#000;letter-spacing:-0.298px;">37.2</span>
<span class="t " style="left:37.20px;top:414px;font-size:15px;line-height:15px;color:#000;letter-spacing:-0.298px;">31.0</span>
<span class="t " style="left:37.20px;top:467px;font-size:15px;line-height:15px;color:#000;letter-spacing:-0.298px;">24.8</span>
<span class="t " style="left:37.20px;top:521px;font-size:15px;line-height:15px;color:#000;letter-spacing:-0.298px;">18.6</span>
<span class="t " style="left:37.20px;top:574px;font-size:15px;line-height:15px;color:#000;letter-spacing:-0.298px;">12.4</span>
<span class="t " style="left:45.20px;top:628px;font-size:15px;line-height:15px;color:#000;letter-spacing:-0.284px;">6.2</span>
<span class="t " style="left:45.20px;top:681px;font-size:15px;line-height:15px;color:#000;letter-spacing:-0.284px;">0.0</span>
<span class="t " style="left:1171.80px;top:147px;font-size:15px;line-height:15px;color:#000;letter-spacing:-0.298px;">90.0</span>
<span class="t " style="left:1171.80px;top:200px;font-size:15px;line-height:15px;color:#000;letter-spacing:-0.298px;">45.0</span>
<span class="t " style="left:1175.80px;top:254px;font-size:15px;line-height:15px;color:#000;letter-spacing:-0.284px;">0.0</span>
<span class="t " style="left:1169.30px;top:307px;font-size:15px;line-height:15px;color:#000;letter-spacing:-0.238px;">-45.0</span>
<span class="t " style="left:1169.30px;top:361px;font-size:15px;line-height:15px;color:#000;letter-spacing:-0.238px;">-90.0</span>
<span class="t " style="left:1167.40px;top:422px;font-size:15px;line-height:15px;color:#000;letter-spacing:-0.333px;">Avg:Exp</span>
<span class="t " style="left:1167.15px;top:621px;font-size:15px;line-height:15px;color:#000;">L</span>
<span class="t " style="left:1167.03px;top:636px;font-size:15px;line-height:15px;color:#000;">I</span>
<span class="t " style="left:1167.15px;top:651px;font-size:15px;line-height:15px;color:#000;">M</span>
<span class="t " style="left:1167.15px;top:666px;font-size:15px;line-height:15px;color:#000;">P</span>
<span class="t " style="left:62.00px;top:697px;font-size:15px;line-height:15px;color:#000;letter-spacing:-0.342px;">20</span>
<span class="t " style="left:207.00px;top:697px;font-size:15px;line-height:15px;color:#000;letter-spacing:-0.342px;">50</span>
<span class="t " style="left:312.00px;top:697px;font-size:15px;line-height:15px;color:#000;letter-spacing:-0.342px;">100</span>
<span class="t " style="left:422.00px;top:697px;font-size:15px;line-height:15px;color:#000;letter-spacing:-0.342px;">200</span>
<span class="t " style="left:567.00px;top:697px;font-size:15px;line-height:15px;color:#000;letter-spacing:-0.342px;">500</span>
<span class="t " style="left:681.00px;top:697px;font-size:15px;line-height:15px;color:#000;letter-spacing:-0.421px;">1k</span>
<span class="t " style="left:791.00px;top:697px;font-size:15px;line-height:15px;color:#000;letter-spacing:-0.421px;">2k</span>
<span class="t " style="left:936.00px;top:697px;font-size:15px;line-height:15px;color:#000;letter-spacing:-0.421px;">5k</span>
<span class="t " style="left:1041.00px;top:697px;font-size:15px;line-height:15px;color:#000;letter-spacing:-0.395px;">10k</span>
<span class="t " style="left:1151.00px;top:697px;font-size:15px;line-height:15px;color:#000;letter-spacing:-0.395px;">20k</span>
<span class="t " style="left:69.75px;top:719px;font-size:15px;line-height:15px;color:#000;letter-spacing:-0.187px;word-spacing:0.187px;">Cursor: 51.07 Hz, 41.79 Ohm, 6.3 deg</span>
<span class="t " style="left:1124.35px;top:719px;font-size:15px;line-height:15px;color:#000;letter-spacing:0.231px;">F(Hz)</span>
</body></html>
